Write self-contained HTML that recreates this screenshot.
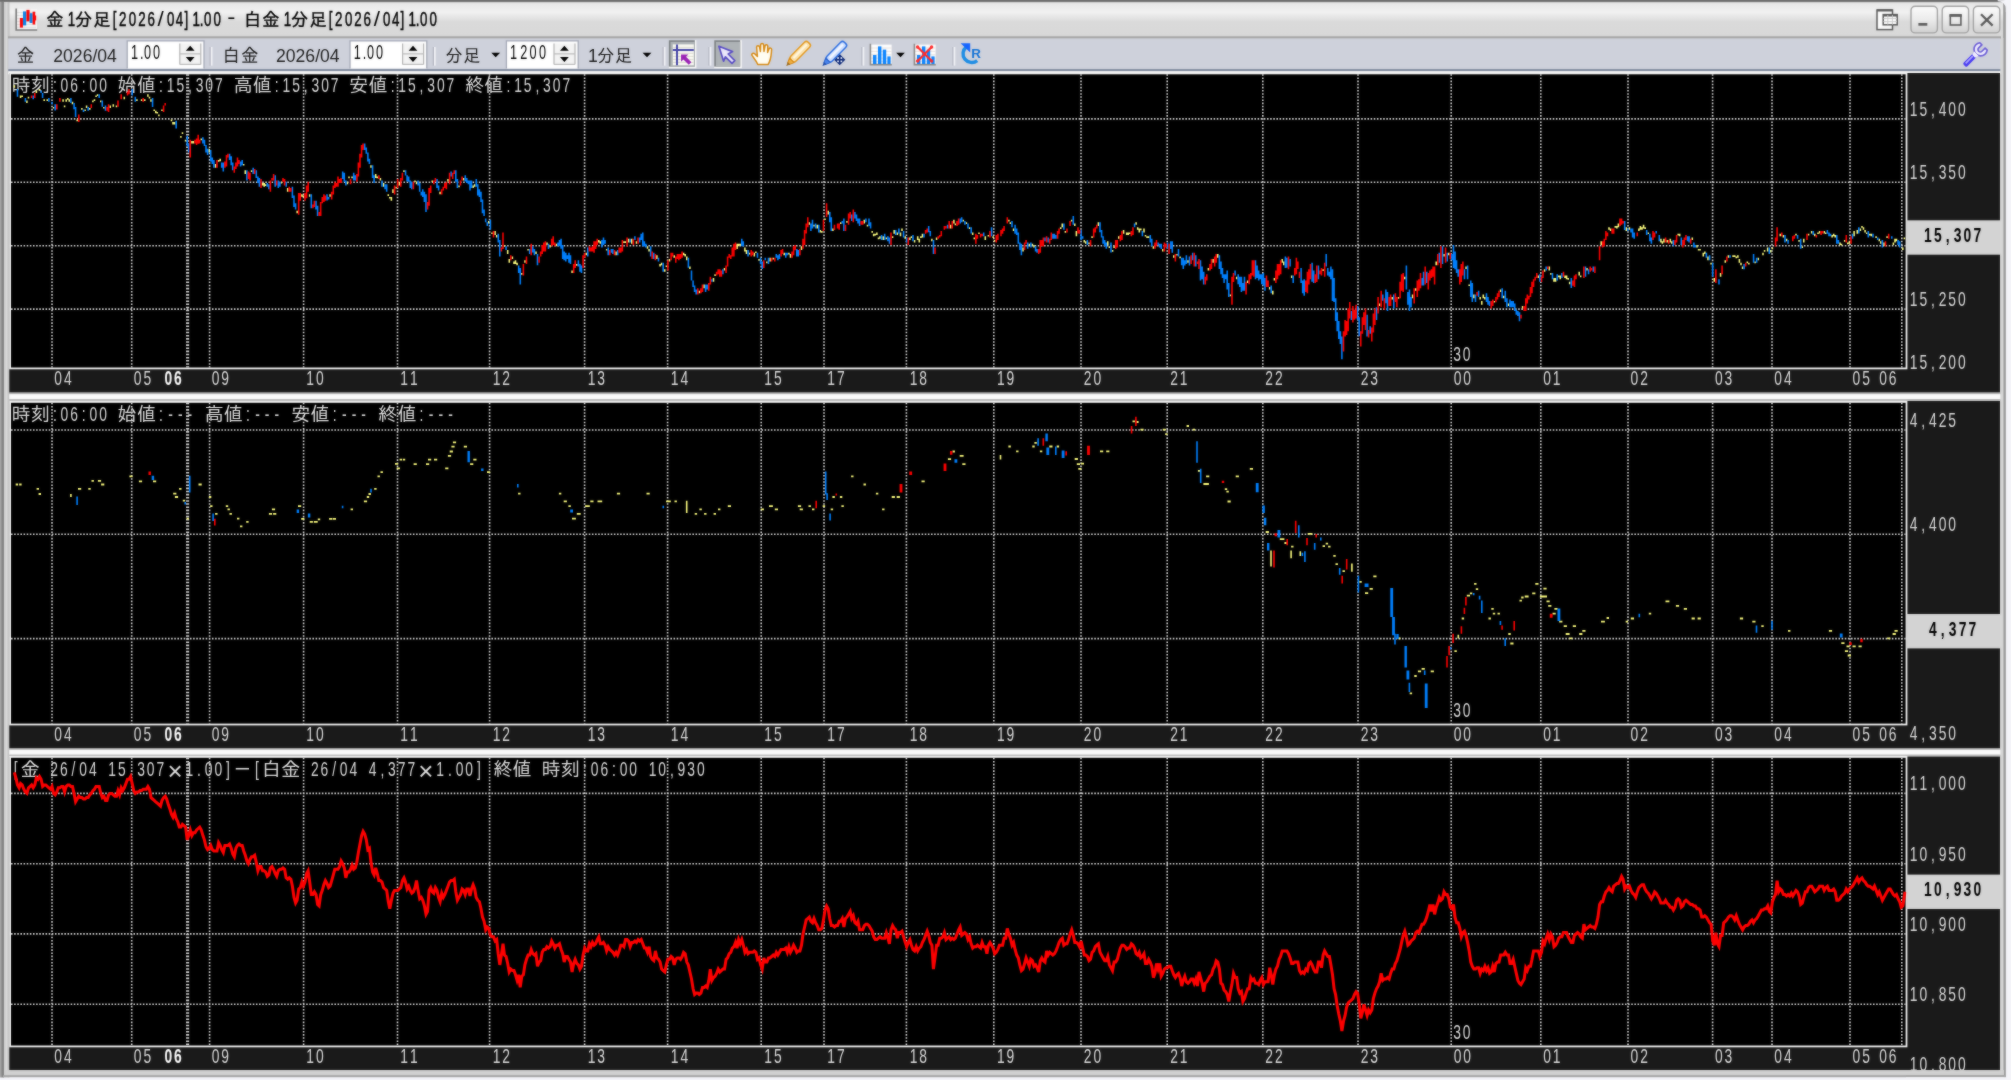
<!DOCTYPE html>
<html lang="ja"><head><meta charset="utf-8"><title>金1分足[2026/04]1.00 - 白金1分足[2026/04]1.00</title>
<style>
html,body{margin:0;padding:0;background:#f4f4f9;overflow:hidden}
svg{display:block}
text{font-family:'Liberation Mono','IPAGothic',monospace;white-space:pre}
.ui text,text.g{font-family:'Liberation Sans','IPAGothic',sans-serif}
</style></head><body>
<svg width="2011" height="1080" viewBox="0 0 2011 1080">
<defs>
<linearGradient id="tb" x1="0" y1="0" x2="0" y2="1">
<stop offset="0" stop-color="#686868"/><stop offset="0.045" stop-color="#7a7a7a"/><stop offset="0.07" stop-color="#e6e6e6"/>
<stop offset="0.32" stop-color="#f1f1f1"/><stop offset="0.58" stop-color="#dadada"/><stop offset="1" stop-color="#d8d8d8"/>
</linearGradient>
<linearGradient id="lb" x1="0" y1="0" x2="1" y2="0">
<stop offset="0" stop-color="#ababab"/><stop offset="0.3" stop-color="#7e7e7e"/><stop offset="0.42" stop-color="#8a8a8a"/><stop offset="0.48" stop-color="#cfcfcf"/><stop offset="0.7" stop-color="#d8d8d8"/><stop offset="0.92" stop-color="#c4c4c4"/><stop offset="1" stop-color="#aaaaaa"/>
</linearGradient>
<linearGradient id="btn" x1="0" y1="0" x2="0" y2="1">
<stop offset="0" stop-color="#fbfbfb"/><stop offset="0.5" stop-color="#ebebeb"/><stop offset="1" stop-color="#d0d0d0"/>
</linearGradient>
<filter id="bl" filterUnits="userSpaceOnUse" x="-10" y="-10" width="2031" height="1100" color-interpolation-filters="sRGB"><feGaussianBlur stdDeviation="0.8" result="b"/><feComposite in="b" in2="SourceGraphic" operator="arithmetic" k1="0" k2="0.45" k3="0.55" k4="0"/></filter>
</defs>
<g filter="url(#bl)">
<rect x="-10" y="-10" width="2031" height="1100" fill="#f4f4f9"/>
<rect x="-10" y="-10" width="2014" height="12" fill="#686868"/>
<rect x="-10" y="0" width="12" height="1077" fill="#ababab"/>
<rect x="0" y="0" width="2005.5" height="1077" fill="#d2d2d2"/>
<rect x="0" y="0" width="2004" height="38" fill="url(#tb)"/>
<rect x="2003.2" y="3" width="2.6" height="1074" fill="#9a9a9a"/>
<rect x="2000" y="38" width="3.4" height="1037" fill="#d6d6d6"/>
<rect x="0" y="2" width="9.3" height="1075.5" fill="url(#lb)"/>
<rect x="4" y="1070" width="2000" height="5.2" fill="#d0d0d0"/>
<rect x="3" y="1075.2" width="2003" height="2" fill="#a4a4a4"/>
<rect x="8" y="36.3" width="1993" height="2.3" fill="#a4a4a4"/>
<rect x="8.3" y="38.5" width="1992" height="30.7" fill="#ced1db"/>
<rect x="8.3" y="69.1" width="1992" height="2.2" fill="#7c879c"/>
<rect x="8.3" y="71.3" width="1992" height="3" fill="#fdfdfd"/>
<rect x="9.3" y="73" width="1990.7" height="319.6" fill="#1a1a1a"/>
<rect x="10.100000000000001" y="73.4" width="1896.4" height="295.0" fill="#000" stroke="#f4f4f4" stroke-width="1.8"/>
<text x="11.4 30.7" y="92.3" font-size="19.30" fill="#dcdcdc">時刻</text>
<text class="g" transform="translate(0 92.3) scale(0.7 1)" x="75.57 86.60 100.39 116.93 127.96 141.75" y="0" font-size="19.8" fill="#dcdcdc">:06:00</text>
<text x="117.6 136.9" y="92.3" font-size="19.30" fill="#dcdcdc">始値</text>
<text class="g" transform="translate(0 92.3) scale(0.7 1)" x="227.21 238.25 252.03 268.57 279.60 293.39 307.17" y="0" font-size="19.8" fill="#dcdcdc">:15,307</text>
<text x="233.4 252.7" y="92.3" font-size="19.30" fill="#dcdcdc">高値</text>
<text class="g" transform="translate(0 92.3) scale(0.7 1)" x="392.64 403.67 417.46 434.00 445.03 458.82 472.60" y="0" font-size="19.8" fill="#dcdcdc">:15,307</text>
<text x="349.1 368.4" y="92.3" font-size="19.30" fill="#dcdcdc">安値</text>
<text class="g" transform="translate(0 92.3) scale(0.7 1)" x="558.07 569.10 582.89 599.43 610.46 624.25 638.03" y="0" font-size="19.8" fill="#dcdcdc">:15,307</text>
<text x="464.9 484.2" y="92.3" font-size="19.30" fill="#dcdcdc">終値</text>
<text class="g" transform="translate(0 92.3) scale(0.7 1)" x="723.50 734.53 748.32 764.85 775.89 789.67 803.46" y="0" font-size="19.8" fill="#dcdcdc">:15,307</text>
<path d="M52 74.3V367.5M131.7 74.3V367.5M209.6 74.3V367.5M303.6 74.3V367.5M397.5 74.3V367.5M489.6 74.3V367.5M584.6 74.3V367.5M667.6 74.3V367.5M761.2 74.3V367.5M824 74.3V367.5M906.4 74.3V367.5M993.8 74.3V367.5M1081 74.3V367.5M1167.2 74.3V367.5M1262.8 74.3V367.5M1358 74.3V367.5M1451.2 74.3V367.5M1540.8 74.3V367.5M1628 74.3V367.5M1712.6 74.3V367.5M1772 74.3V367.5M1850 74.3V367.5M1901.8 74.3V367.5M11.0 118.9H1905.6M11.0 182.3H1905.6M11.0 245.7H1905.6M11.0 309.1H1905.6" stroke="#d6d6d6" stroke-width="1.6" stroke-dasharray="1.57 1.57" fill="none"/>
<path d="M187.6 74.3V367.5" stroke="#d6d6d6" stroke-width="3.1" stroke-dasharray="1.57 1.57" fill="none"/>
<path d="M13.6 85.3h1.57v2.5h-1.57zM19.8 95.4h1.57v2.5h-1.57zM21.4 95.4h1.57v1.7h-1.57zM26.1 100.5h1.57v2.5h-1.57zM27.7 96.7h1.57v1.7h-1.57zM35.6 90.4h1.57v2.5h-1.57zM38.7 89.1h1.57v1.7h-1.57zM43.4 99.2h1.57v1.7h-1.57zM46.5 99.2h1.57v1.7h-1.57zM52.8 106.9h1.57v1.7h-1.57zM62.3 99.2h1.57v2.5h-1.57zM63.8 105.6h1.57v1.7h-1.57zM65.4 99.2h1.57v2.5h-1.57zM67.0 98.0h1.57v1.7h-1.57zM68.5 99.2h1.57v2.5h-1.57zM71.7 101.8h1.57v2.5h-1.57zM76.4 119.5h1.57v1.7h-1.57zM81.1 108.1h1.57v1.7h-1.57zM84.3 109.4h1.57v1.7h-1.57zM85.8 105.6h1.57v2.5h-1.57zM89.0 108.1h1.57v1.7h-1.57zM92.1 100.5h1.57v1.7h-1.57zM93.7 99.2h1.57v1.7h-1.57zM95.3 95.4h1.57v1.7h-1.57zM96.8 94.2h1.57v1.7h-1.57zM100.0 100.5h1.57v1.7h-1.57zM103.1 106.9h1.57v1.7h-1.57zM109.4 105.6h1.57v2.5h-1.57zM112.5 104.3h1.57v2.5h-1.57zM115.7 105.6h1.57v1.7h-1.57zM123.5 96.7h1.57v2.5h-1.57zM136.1 99.2h1.57v1.7h-1.57zM140.8 99.2h1.57v1.7h-1.57zM144.0 99.2h1.57v1.7h-1.57zM147.1 94.2h1.57v2.5h-1.57zM148.7 96.7h1.57v1.7h-1.57zM150.2 99.2h1.57v2.5h-1.57zM153.4 109.4h1.57v1.7h-1.57zM155.0 110.7h1.57v2.5h-1.57zM156.5 111.9h1.57v1.7h-1.57zM158.1 114.5h1.57v1.7h-1.57zM161.2 109.4h1.57v1.7h-1.57zM170.7 119.5h1.57v1.7h-1.57zM172.2 122.1h1.57v2.5h-1.57zM173.8 122.1h1.57v2.5h-1.57zM180.1 136.0h1.57v1.7h-1.57zM181.7 132.2h1.57v1.7h-1.57zM184.8 139.8h1.57v1.7h-1.57zM191.1 141.1h1.57v2.5h-1.57zM192.7 141.1h1.57v2.5h-1.57zM200.5 138.6h1.57v1.7h-1.57zM208.4 148.7h1.57v3.8h-1.57zM214.7 163.9h1.57v3.8h-1.57zM217.8 160.1h1.57v1.7h-1.57zM219.4 158.8h1.57v2.5h-1.57zM242.9 163.9h1.57v1.7h-1.57zM244.5 170.3h1.57v3.8h-1.57zM250.8 170.3h1.57v1.7h-1.57zM261.8 182.9h1.57v2.5h-1.57zM263.4 182.9h1.57v3.8h-1.57zM264.9 184.2h1.57v1.7h-1.57zM280.6 181.7h1.57v1.7h-1.57zM286.9 188.0h1.57v3.8h-1.57zM296.4 210.8h1.57v2.5h-1.57zM301.1 194.3h1.57v2.5h-1.57zM302.6 195.6h1.57v1.7h-1.57zM308.9 194.3h1.57v2.5h-1.57zM329.3 194.3h1.57v2.5h-1.57zM346.6 181.7h1.57v2.5h-1.57zM348.2 176.6h1.57v1.7h-1.57zM351.3 176.6h1.57v1.7h-1.57zM370.2 165.2h1.57v2.5h-1.57zM374.9 174.1h1.57v3.8h-1.57zM376.5 176.6h1.57v1.7h-1.57zM379.6 177.9h1.57v2.5h-1.57zM382.8 182.9h1.57v3.8h-1.57zM387.5 194.3h1.57v1.7h-1.57zM389.0 196.9h1.57v1.7h-1.57zM390.6 196.9h1.57v3.8h-1.57zM392.2 189.3h1.57v3.8h-1.57zM395.3 186.7h1.57v1.7h-1.57zM398.5 181.7h1.57v3.8h-1.57zM403.2 170.3h1.57v1.7h-1.57zM414.2 180.4h1.57v1.7h-1.57zM415.8 181.7h1.57v2.5h-1.57zM431.5 180.4h1.57v1.7h-1.57zM439.3 191.8h1.57v2.5h-1.57zM447.2 179.1h1.57v2.5h-1.57zM458.2 185.5h1.57v1.7h-1.57zM462.9 177.9h1.57v2.5h-1.57zM472.3 185.5h1.57v2.5h-1.57zM473.9 184.2h1.57v2.5h-1.57zM488.0 221.0h1.57v2.5h-1.57zM491.2 232.4h1.57v1.7h-1.57zM494.3 231.1h1.57v3.8h-1.57zM495.9 234.9h1.57v2.5h-1.57zM503.7 245.1h1.57v1.7h-1.57zM506.9 250.1h1.57v3.8h-1.57zM508.5 259.0h1.57v3.8h-1.57zM511.6 256.5h1.57v2.5h-1.57zM513.2 261.5h1.57v2.5h-1.57zM514.7 260.3h1.57v3.8h-1.57zM516.3 262.8h1.57v2.5h-1.57zM521.0 273.0h1.57v1.7h-1.57zM524.2 260.3h1.57v2.5h-1.57zM527.3 248.9h1.57v1.7h-1.57zM535.2 251.4h1.57v2.5h-1.57zM546.2 242.5h1.57v2.5h-1.57zM549.3 245.1h1.57v2.5h-1.57zM555.6 243.8h1.57v2.5h-1.57zM571.3 270.4h1.57v2.5h-1.57zM576.0 264.1h1.57v1.7h-1.57zM585.4 252.7h1.57v2.5h-1.57zM598.0 240.0h1.57v2.5h-1.57zM599.6 241.3h1.57v2.5h-1.57zM605.9 248.9h1.57v1.7h-1.57zM615.3 251.4h1.57v3.8h-1.57zM623.1 241.3h1.57v1.7h-1.57zM624.7 241.3h1.57v1.7h-1.57zM627.9 238.7h1.57v3.8h-1.57zM631.0 238.7h1.57v5.1h-1.57zM635.7 241.3h1.57v2.5h-1.57zM646.7 246.3h1.57v2.5h-1.57zM648.3 248.9h1.57v2.5h-1.57zM656.1 255.2h1.57v3.8h-1.57zM659.3 264.1h1.57v2.5h-1.57zM660.8 262.8h1.57v2.5h-1.57zM664.0 269.2h1.57v2.5h-1.57zM665.6 265.4h1.57v1.7h-1.57zM668.7 259.0h1.57v2.5h-1.57zM673.4 255.2h1.57v2.5h-1.57zM682.8 252.7h1.57v2.5h-1.57zM684.4 253.9h1.57v2.5h-1.57zM686.0 256.5h1.57v3.8h-1.57zM689.1 266.6h1.57v2.5h-1.57zM698.6 290.7h1.57v2.5h-1.57zM703.3 284.4h1.57v3.8h-1.57zM712.7 278.0h1.57v3.8h-1.57zM714.3 274.2h1.57v1.7h-1.57zM723.7 267.9h1.57v2.5h-1.57zM736.3 243.8h1.57v5.1h-1.57zM737.8 243.8h1.57v2.5h-1.57zM739.4 243.8h1.57v1.7h-1.57zM744.1 247.6h1.57v3.8h-1.57zM745.7 250.1h1.57v3.8h-1.57zM748.8 252.7h1.57v1.7h-1.57zM753.5 252.7h1.57v3.8h-1.57zM755.1 251.4h1.57v1.7h-1.57zM758.3 259.0h1.57v1.7h-1.57zM766.1 261.5h1.57v1.7h-1.57zM769.3 257.7h1.57v3.8h-1.57zM772.4 257.7h1.57v1.7h-1.57zM783.4 252.7h1.57v2.5h-1.57zM788.1 252.7h1.57v1.7h-1.57zM789.7 253.9h1.57v3.8h-1.57zM800.7 246.3h1.57v3.8h-1.57zM808.5 222.2h1.57v2.5h-1.57zM813.2 224.8h1.57v1.7h-1.57zM816.4 224.8h1.57v3.8h-1.57zM819.5 229.9h1.57v2.5h-1.57zM821.1 231.1h1.57v1.7h-1.57zM824.2 218.4h1.57v1.7h-1.57zM827.4 210.8h1.57v3.8h-1.57zM832.1 228.6h1.57v2.5h-1.57zM840.0 222.2h1.57v1.7h-1.57zM846.2 221.0h1.57v1.7h-1.57zM863.5 219.7h1.57v3.8h-1.57zM866.7 224.8h1.57v1.7h-1.57zM871.4 231.1h1.57v1.7h-1.57zM872.9 233.7h1.57v2.5h-1.57zM874.5 233.7h1.57v1.7h-1.57zM876.1 232.4h1.57v2.5h-1.57zM877.7 237.5h1.57v1.7h-1.57zM879.2 236.2h1.57v2.5h-1.57zM882.4 236.2h1.57v3.8h-1.57zM885.5 237.5h1.57v1.7h-1.57zM891.8 236.2h1.57v1.7h-1.57zM893.4 229.9h1.57v3.8h-1.57zM896.5 232.4h1.57v2.5h-1.57zM899.7 232.4h1.57v3.8h-1.57zM901.2 228.6h1.57v2.5h-1.57zM904.4 236.2h1.57v2.5h-1.57zM909.1 237.5h1.57v2.5h-1.57zM910.7 236.2h1.57v1.7h-1.57zM913.8 240.0h1.57v2.5h-1.57zM916.9 236.2h1.57v3.8h-1.57zM918.5 238.7h1.57v3.8h-1.57zM920.1 236.2h1.57v1.7h-1.57zM921.7 233.7h1.57v3.8h-1.57zM931.1 238.7h1.57v2.5h-1.57zM935.8 237.5h1.57v2.5h-1.57zM949.9 224.8h1.57v3.8h-1.57zM953.1 219.7h1.57v3.8h-1.57zM954.6 223.5h1.57v1.7h-1.57zM962.5 219.7h1.57v1.7h-1.57zM965.6 222.2h1.57v1.7h-1.57zM968.8 227.3h1.57v1.7h-1.57zM971.9 232.4h1.57v2.5h-1.57zM973.5 237.5h1.57v1.7h-1.57zM978.2 232.4h1.57v1.7h-1.57zM984.5 236.2h1.57v3.8h-1.57zM987.6 234.9h1.57v1.7h-1.57zM992.4 236.2h1.57v1.7h-1.57zM993.9 240.0h1.57v1.7h-1.57zM1008.1 219.7h1.57v1.7h-1.57zM1009.6 222.2h1.57v1.7h-1.57zM1012.8 228.6h1.57v2.5h-1.57zM1022.2 247.6h1.57v3.8h-1.57zM1028.5 243.8h1.57v2.5h-1.57zM1031.6 243.8h1.57v1.7h-1.57zM1033.2 245.1h1.57v2.5h-1.57zM1059.9 227.3h1.57v1.7h-1.57zM1061.5 223.5h1.57v3.8h-1.57zM1064.6 231.1h1.57v1.7h-1.57zM1070.9 219.7h1.57v1.7h-1.57zM1074.0 223.5h1.57v2.5h-1.57zM1075.6 231.1h1.57v5.1h-1.57zM1083.5 240.0h1.57v2.5h-1.57zM1085.0 241.3h1.57v2.5h-1.57zM1088.2 242.5h1.57v1.7h-1.57zM1091.3 236.2h1.57v1.7h-1.57zM1097.6 222.2h1.57v3.8h-1.57zM1107.0 241.3h1.57v3.8h-1.57zM1108.6 246.3h1.57v1.7h-1.57zM1111.8 250.1h1.57v1.7h-1.57zM1113.3 246.3h1.57v1.7h-1.57zM1118.0 236.2h1.57v2.5h-1.57zM1122.8 229.9h1.57v3.8h-1.57zM1125.9 232.4h1.57v2.5h-1.57zM1127.5 232.4h1.57v2.5h-1.57zM1129.0 232.4h1.57v1.7h-1.57zM1135.3 222.2h1.57v2.5h-1.57zM1136.9 227.3h1.57v2.5h-1.57zM1138.5 228.6h1.57v3.8h-1.57zM1140.0 228.6h1.57v1.7h-1.57zM1143.2 228.6h1.57v3.8h-1.57zM1144.7 234.9h1.57v1.7h-1.57zM1146.3 236.2h1.57v1.7h-1.57zM1147.9 236.2h1.57v1.7h-1.57zM1152.6 246.3h1.57v2.5h-1.57zM1162.0 248.9h1.57v2.5h-1.57zM1173.0 255.2h1.57v2.5h-1.57zM1176.2 253.9h1.57v1.7h-1.57zM1179.3 256.5h1.57v1.7h-1.57zM1187.2 260.3h1.57v2.5h-1.57zM1207.6 267.9h1.57v2.5h-1.57zM1212.3 259.0h1.57v3.8h-1.57zM1217.0 253.9h1.57v3.8h-1.57zM1229.6 294.5h1.57v1.7h-1.57zM1235.9 276.8h1.57v2.5h-1.57zM1246.9 280.6h1.57v2.5h-1.57zM1268.9 286.9h1.57v2.5h-1.57zM1272.0 290.7h1.57v3.8h-1.57zM1273.6 278.0h1.57v2.5h-1.57zM1281.4 259.0h1.57v3.8h-1.57zM1283.0 261.5h1.57v3.8h-1.57zM1290.9 275.5h1.57v2.5h-1.57zM1322.3 269.2h1.57v1.7h-1.57zM1378.8 303.4h1.57v2.5h-1.57zM1391.4 297.1h1.57v2.5h-1.57zM1397.7 297.1h1.57v1.7h-1.57zM1404.0 276.8h1.57v2.5h-1.57zM1411.8 294.5h1.57v3.8h-1.57zM1415.0 288.2h1.57v2.5h-1.57zM1435.4 261.5h1.57v3.8h-1.57zM1443.3 253.9h1.57v2.5h-1.57zM1448.0 252.7h1.57v2.5h-1.57zM1465.3 266.6h1.57v2.5h-1.57zM1468.4 284.4h1.57v1.7h-1.57zM1473.1 294.5h1.57v3.8h-1.57zM1479.4 297.1h1.57v2.5h-1.57zM1481.0 300.9h1.57v3.8h-1.57zM1482.5 294.5h1.57v3.8h-1.57zM1484.1 297.1h1.57v2.5h-1.57zM1493.5 300.9h1.57v1.7h-1.57zM1499.8 289.4h1.57v2.5h-1.57zM1503.0 295.8h1.57v2.5h-1.57zM1507.7 303.4h1.57v2.5h-1.57zM1521.8 305.9h1.57v2.5h-1.57zM1537.5 275.5h1.57v2.5h-1.57zM1543.8 269.2h1.57v2.5h-1.57zM1548.5 266.6h1.57v3.8h-1.57zM1550.1 273.0h1.57v1.7h-1.57zM1553.2 278.0h1.57v3.8h-1.57zM1554.8 278.0h1.57v3.8h-1.57zM1557.9 275.5h1.57v1.7h-1.57zM1559.5 275.5h1.57v3.8h-1.57zM1564.2 275.5h1.57v2.5h-1.57zM1565.8 275.5h1.57v3.8h-1.57zM1567.4 278.0h1.57v1.7h-1.57zM1568.9 281.8h1.57v2.5h-1.57zM1578.4 271.7h1.57v3.8h-1.57zM1579.9 275.5h1.57v1.7h-1.57zM1586.2 267.9h1.57v2.5h-1.57zM1600.4 241.3h1.57v3.8h-1.57zM1608.2 227.3h1.57v2.5h-1.57zM1609.8 228.6h1.57v2.5h-1.57zM1614.5 226.0h1.57v1.7h-1.57zM1616.1 226.0h1.57v2.5h-1.57zM1617.6 223.5h1.57v3.8h-1.57zM1625.5 227.3h1.57v3.8h-1.57zM1628.6 227.3h1.57v2.5h-1.57zM1638.1 228.6h1.57v2.5h-1.57zM1639.6 226.0h1.57v3.8h-1.57zM1641.2 227.3h1.57v2.5h-1.57zM1642.8 224.8h1.57v3.8h-1.57zM1644.4 227.3h1.57v1.7h-1.57zM1647.5 232.4h1.57v1.7h-1.57zM1660.1 238.7h1.57v3.8h-1.57zM1661.6 241.3h1.57v2.5h-1.57zM1663.2 238.7h1.57v3.8h-1.57zM1666.4 240.0h1.57v2.5h-1.57zM1669.5 238.7h1.57v3.8h-1.57zM1671.1 241.3h1.57v2.5h-1.57zM1677.4 233.7h1.57v1.7h-1.57zM1678.9 233.7h1.57v2.5h-1.57zM1691.5 237.5h1.57v2.5h-1.57zM1696.2 245.1h1.57v2.5h-1.57zM1697.8 248.9h1.57v1.7h-1.57zM1699.3 248.9h1.57v1.7h-1.57zM1702.5 252.7h1.57v3.8h-1.57zM1704.1 251.4h1.57v2.5h-1.57zM1707.2 256.5h1.57v3.8h-1.57zM1710.3 262.8h1.57v1.7h-1.57zM1713.5 278.0h1.57v3.8h-1.57zM1719.8 273.0h1.57v3.8h-1.57zM1724.5 260.3h1.57v2.5h-1.57zM1727.6 255.2h1.57v2.5h-1.57zM1732.3 255.2h1.57v1.7h-1.57zM1733.9 255.2h1.57v1.7h-1.57zM1735.5 256.5h1.57v1.7h-1.57zM1737.1 255.2h1.57v2.5h-1.57zM1738.6 259.0h1.57v3.8h-1.57zM1740.2 262.8h1.57v2.5h-1.57zM1741.8 266.6h1.57v2.5h-1.57zM1746.5 261.5h1.57v1.7h-1.57zM1748.1 262.8h1.57v1.7h-1.57zM1754.3 261.5h1.57v1.7h-1.57zM1757.5 257.7h1.57v2.5h-1.57zM1762.2 252.7h1.57v2.5h-1.57zM1763.8 250.1h1.57v1.7h-1.57zM1766.9 247.6h1.57v3.8h-1.57zM1770.0 250.1h1.57v2.5h-1.57zM1771.6 247.6h1.57v1.7h-1.57zM1779.5 233.7h1.57v2.5h-1.57zM1782.6 234.9h1.57v2.5h-1.57zM1785.8 238.7h1.57v2.5h-1.57zM1795.2 233.7h1.57v1.7h-1.57zM1798.3 240.0h1.57v1.7h-1.57zM1801.5 246.3h1.57v1.7h-1.57zM1803.0 238.7h1.57v3.8h-1.57zM1807.8 233.7h1.57v1.7h-1.57zM1810.9 231.1h1.57v2.5h-1.57zM1814.0 233.7h1.57v2.5h-1.57zM1817.2 232.4h1.57v1.7h-1.57zM1818.8 231.1h1.57v2.5h-1.57zM1823.5 231.1h1.57v2.5h-1.57zM1825.0 232.4h1.57v1.7h-1.57zM1831.3 234.9h1.57v2.5h-1.57zM1832.9 233.7h1.57v2.5h-1.57zM1834.5 234.9h1.57v2.5h-1.57zM1839.2 242.5h1.57v2.5h-1.57zM1840.7 243.8h1.57v1.7h-1.57zM1843.9 240.0h1.57v1.7h-1.57zM1847.0 242.5h1.57v1.7h-1.57zM1848.6 241.3h1.57v2.5h-1.57zM1853.3 231.1h1.57v5.1h-1.57zM1856.5 229.9h1.57v3.8h-1.57zM1859.6 228.6h1.57v2.5h-1.57zM1861.2 226.0h1.57v1.7h-1.57zM1862.7 227.3h1.57v2.5h-1.57zM1864.3 229.9h1.57v2.5h-1.57zM1865.9 232.4h1.57v1.7h-1.57zM1869.0 233.7h1.57v1.7h-1.57zM1870.6 233.7h1.57v2.5h-1.57zM1875.3 236.2h1.57v1.7h-1.57zM1878.5 238.7h1.57v2.5h-1.57zM1880.0 241.3h1.57v2.5h-1.57zM1883.2 242.5h1.57v3.8h-1.57zM1886.3 236.2h1.57v1.7h-1.57zM1892.6 242.5h1.57v2.5h-1.57zM1894.2 238.7h1.57v3.8h-1.57zM1895.7 238.7h1.57v2.5h-1.57zM1902.0 247.6h1.57v2.5h-1.57zM1903.6 237.5h1.57v1.7h-1.57z" fill="#ffff80"/><path d="M16.7 89.1h1.57v7.6h-1.57zM24.6 98.0h1.57v3.8h-1.57zM32.4 95.4h1.57v3.8h-1.57zM40.3 90.4h1.57v2.5h-1.57zM41.8 92.9h1.57v5.1h-1.57zM48.1 98.0h1.57v3.8h-1.57zM51.3 101.8h1.57v2.5h-1.57zM54.4 104.3h1.57v6.3h-1.57zM70.1 98.0h1.57v5.1h-1.57zM73.3 103.0h1.57v6.3h-1.57zM74.8 106.9h1.57v10.1h-1.57zM82.7 109.4h1.57v2.5h-1.57zM87.4 106.9h1.57v3.8h-1.57zM98.4 94.2h1.57v3.8h-1.57zM101.5 100.5h1.57v6.3h-1.57zM104.7 105.6h1.57v5.1h-1.57zM131.4 89.1h1.57v6.3h-1.57zM134.5 96.7h1.57v5.1h-1.57zM151.8 98.0h1.57v8.9h-1.57zM175.4 120.8h1.57v7.6h-1.57zM186.4 136.0h1.57v10.1h-1.57zM187.9 143.6h1.57v8.9h-1.57zM202.1 137.3h1.57v6.3h-1.57zM203.7 139.8h1.57v6.3h-1.57zM205.2 144.9h1.57v7.6h-1.57zM206.8 148.7h1.57v6.3h-1.57zM209.9 150.0h1.57v11.4h-1.57zM211.5 157.6h1.57v6.3h-1.57zM213.1 160.1h1.57v7.6h-1.57zM220.9 162.6h1.57v5.1h-1.57zM222.5 162.6h1.57v8.9h-1.57zM228.8 153.8h1.57v6.3h-1.57zM230.4 156.3h1.57v8.9h-1.57zM231.9 162.6h1.57v7.6h-1.57zM239.8 161.4h1.57v5.1h-1.57zM241.4 160.1h1.57v5.1h-1.57zM246.1 170.3h1.57v10.1h-1.57zM252.4 167.7h1.57v6.3h-1.57zM255.5 170.3h1.57v7.6h-1.57zM257.1 176.6h1.57v6.3h-1.57zM258.6 177.9h1.57v8.9h-1.57zM266.5 182.9h1.57v3.8h-1.57zM268.1 184.2h1.57v5.1h-1.57zM274.4 175.3h1.57v11.4h-1.57zM277.5 180.4h1.57v7.6h-1.57zM279.1 181.7h1.57v5.1h-1.57zM285.4 181.7h1.57v5.1h-1.57zM291.6 186.7h1.57v11.4h-1.57zM293.2 195.6h1.57v11.4h-1.57zM294.8 203.2h1.57v6.3h-1.57zM310.5 194.3h1.57v13.9h-1.57zM315.2 200.7h1.57v8.9h-1.57zM316.8 205.8h1.57v10.1h-1.57zM326.2 194.3h1.57v6.3h-1.57zM327.8 196.9h1.57v2.5h-1.57zM341.9 171.5h1.57v7.6h-1.57zM343.5 172.8h1.57v8.9h-1.57zM345.1 180.4h1.57v5.1h-1.57zM352.9 172.8h1.57v7.6h-1.57zM354.5 175.3h1.57v5.1h-1.57zM363.9 143.6h1.57v6.3h-1.57zM365.5 147.4h1.57v6.3h-1.57zM367.1 152.5h1.57v8.9h-1.57zM368.6 158.8h1.57v5.1h-1.57zM371.8 165.2h1.57v12.7h-1.57zM373.3 175.3h1.57v7.6h-1.57zM381.2 180.4h1.57v6.3h-1.57zM384.3 184.2h1.57v5.1h-1.57zM385.9 184.2h1.57v7.6h-1.57zM404.8 170.3h1.57v5.1h-1.57zM406.3 175.3h1.57v6.3h-1.57zM407.9 176.6h1.57v5.1h-1.57zM409.5 180.4h1.57v7.6h-1.57zM411.0 181.7h1.57v7.6h-1.57zM417.3 180.4h1.57v5.1h-1.57zM418.9 182.9h1.57v8.9h-1.57zM420.5 191.8h1.57v3.8h-1.57zM422.0 189.3h1.57v7.6h-1.57zM423.6 191.8h1.57v10.1h-1.57zM425.2 194.3h1.57v17.8h-1.57zM436.2 179.1h1.57v8.9h-1.57zM437.8 185.5h1.57v5.1h-1.57zM450.3 171.5h1.57v5.1h-1.57zM455.0 170.3h1.57v11.4h-1.57zM456.6 179.1h1.57v8.9h-1.57zM464.5 175.3h1.57v6.3h-1.57zM466.0 177.9h1.57v5.1h-1.57zM467.6 180.4h1.57v3.8h-1.57zM469.2 180.4h1.57v10.1h-1.57zM470.7 180.4h1.57v7.6h-1.57zM475.5 179.1h1.57v7.6h-1.57zM477.0 184.2h1.57v11.4h-1.57zM478.6 189.3h1.57v7.6h-1.57zM480.2 191.8h1.57v10.1h-1.57zM481.7 199.4h1.57v13.9h-1.57zM483.3 209.6h1.57v6.3h-1.57zM484.9 218.4h1.57v3.8h-1.57zM486.5 222.2h1.57v3.8h-1.57zM489.6 219.7h1.57v10.1h-1.57zM497.5 233.7h1.57v8.9h-1.57zM499.0 240.0h1.57v16.5h-1.57zM505.3 246.3h1.57v3.8h-1.57zM517.9 265.4h1.57v7.6h-1.57zM519.5 267.9h1.57v16.5h-1.57zM528.9 248.9h1.57v5.1h-1.57zM532.0 246.3h1.57v6.3h-1.57zM533.6 248.9h1.57v6.3h-1.57zM536.7 253.9h1.57v11.4h-1.57zM547.7 243.8h1.57v5.1h-1.57zM557.2 242.5h1.57v3.8h-1.57zM558.7 240.0h1.57v6.3h-1.57zM560.3 238.7h1.57v10.1h-1.57zM561.9 245.1h1.57v13.9h-1.57zM563.4 251.4h1.57v8.9h-1.57zM565.0 252.7h1.57v8.9h-1.57zM566.6 255.2h1.57v3.8h-1.57zM568.2 252.7h1.57v10.1h-1.57zM569.7 255.2h1.57v8.9h-1.57zM577.6 260.3h1.57v6.3h-1.57zM579.2 264.1h1.57v7.6h-1.57zM580.7 265.4h1.57v7.6h-1.57zM587.0 247.6h1.57v8.9h-1.57zM601.1 240.0h1.57v7.6h-1.57zM602.7 237.5h1.57v7.6h-1.57zM604.3 240.0h1.57v3.8h-1.57zM607.4 247.6h1.57v7.6h-1.57zM610.6 248.9h1.57v3.8h-1.57zM612.1 248.9h1.57v5.1h-1.57zM616.9 250.1h1.57v5.1h-1.57zM629.4 238.7h1.57v3.8h-1.57zM634.1 236.2h1.57v3.8h-1.57zM638.9 237.5h1.57v5.1h-1.57zM640.4 233.7h1.57v6.3h-1.57zM642.0 232.4h1.57v13.9h-1.57zM643.6 241.3h1.57v5.1h-1.57zM645.1 243.8h1.57v3.8h-1.57zM649.9 246.3h1.57v10.1h-1.57zM653.0 252.7h1.57v6.3h-1.57zM657.7 257.7h1.57v3.8h-1.57zM662.4 262.8h1.57v8.9h-1.57zM687.6 257.7h1.57v10.1h-1.57zM690.7 270.4h1.57v10.1h-1.57zM692.3 280.6h1.57v6.3h-1.57zM693.8 285.6h1.57v6.3h-1.57zM695.4 289.4h1.57v5.1h-1.57zM704.8 284.4h1.57v7.6h-1.57zM706.4 284.4h1.57v5.1h-1.57zM711.1 279.3h1.57v2.5h-1.57zM722.1 269.2h1.57v5.1h-1.57zM741.0 238.7h1.57v7.6h-1.57zM742.5 241.3h1.57v5.1h-1.57zM747.3 250.1h1.57v6.3h-1.57zM756.7 252.7h1.57v5.1h-1.57zM759.8 257.7h1.57v6.3h-1.57zM761.4 261.5h1.57v7.6h-1.57zM764.5 257.7h1.57v2.5h-1.57zM767.7 257.7h1.57v6.3h-1.57zM775.5 253.9h1.57v3.8h-1.57zM777.1 255.2h1.57v5.1h-1.57zM778.7 253.9h1.57v5.1h-1.57zM785.0 252.7h1.57v5.1h-1.57zM786.5 252.7h1.57v2.5h-1.57zM796.0 248.9h1.57v7.6h-1.57zM797.5 250.1h1.57v6.3h-1.57zM810.1 223.5h1.57v7.6h-1.57zM811.7 219.7h1.57v8.9h-1.57zM814.8 223.5h1.57v5.1h-1.57zM818.0 224.8h1.57v7.6h-1.57zM829.0 212.1h1.57v10.1h-1.57zM830.5 217.2h1.57v13.9h-1.57zM841.5 221.0h1.57v2.5h-1.57zM843.1 218.4h1.57v12.7h-1.57zM851.0 214.6h1.57v6.3h-1.57zM854.1 212.1h1.57v6.3h-1.57zM855.7 214.6h1.57v6.3h-1.57zM857.2 218.4h1.57v5.1h-1.57zM858.8 218.4h1.57v7.6h-1.57zM865.1 218.4h1.57v3.8h-1.57zM868.2 218.4h1.57v7.6h-1.57zM869.8 222.2h1.57v6.3h-1.57zM880.8 234.9h1.57v5.1h-1.57zM883.9 233.7h1.57v6.3h-1.57zM887.1 236.2h1.57v5.1h-1.57zM888.7 237.5h1.57v6.3h-1.57zM894.9 229.9h1.57v5.1h-1.57zM898.1 228.6h1.57v5.1h-1.57zM902.8 231.1h1.57v6.3h-1.57zM905.9 237.5h1.57v5.1h-1.57zM912.2 234.9h1.57v6.3h-1.57zM923.2 233.7h1.57v3.8h-1.57zM927.9 226.0h1.57v6.3h-1.57zM929.5 231.1h1.57v5.1h-1.57zM932.7 240.0h1.57v13.9h-1.57zM946.8 224.8h1.57v3.8h-1.57zM959.4 218.4h1.57v5.1h-1.57zM960.9 217.2h1.57v5.1h-1.57zM964.1 221.0h1.57v3.8h-1.57zM967.2 223.5h1.57v5.1h-1.57zM970.4 227.3h1.57v6.3h-1.57zM982.9 232.4h1.57v3.8h-1.57zM990.8 227.3h1.57v8.9h-1.57zM1011.2 221.0h1.57v6.3h-1.57zM1014.3 224.8h1.57v8.9h-1.57zM1015.9 228.6h1.57v6.3h-1.57zM1017.5 232.4h1.57v11.4h-1.57zM1019.1 242.5h1.57v7.6h-1.57zM1020.6 243.8h1.57v11.4h-1.57zM1026.9 242.5h1.57v6.3h-1.57zM1030.1 242.5h1.57v5.1h-1.57zM1034.8 246.3h1.57v5.1h-1.57zM1036.3 248.9h1.57v3.8h-1.57zM1044.2 237.5h1.57v3.8h-1.57zM1047.3 237.5h1.57v5.1h-1.57zM1052.1 233.7h1.57v5.1h-1.57zM1053.6 233.7h1.57v5.1h-1.57zM1055.2 234.9h1.57v3.8h-1.57zM1063.1 223.5h1.57v6.3h-1.57zM1072.5 215.9h1.57v8.9h-1.57zM1080.3 229.9h1.57v10.1h-1.57zM1081.9 236.2h1.57v2.5h-1.57zM1086.6 240.0h1.57v5.1h-1.57zM1099.2 222.2h1.57v10.1h-1.57zM1100.8 229.9h1.57v7.6h-1.57zM1102.3 236.2h1.57v7.6h-1.57zM1103.9 240.0h1.57v6.3h-1.57zM1105.5 242.5h1.57v6.3h-1.57zM1110.2 242.5h1.57v10.1h-1.57zM1133.8 223.5h1.57v3.8h-1.57zM1141.6 231.1h1.57v5.1h-1.57zM1149.5 234.9h1.57v7.6h-1.57zM1151.0 238.7h1.57v7.6h-1.57zM1157.3 242.5h1.57v2.5h-1.57zM1158.9 243.8h1.57v3.8h-1.57zM1160.5 243.8h1.57v5.1h-1.57zM1166.7 242.5h1.57v6.3h-1.57zM1169.9 241.3h1.57v7.6h-1.57zM1171.5 241.3h1.57v11.4h-1.57zM1177.7 248.9h1.57v7.6h-1.57zM1180.9 257.7h1.57v7.6h-1.57zM1182.5 257.7h1.57v11.4h-1.57zM1184.0 260.3h1.57v5.1h-1.57zM1185.6 255.2h1.57v8.9h-1.57zM1188.7 256.5h1.57v8.9h-1.57zM1191.9 252.7h1.57v7.6h-1.57zM1195.0 255.2h1.57v11.4h-1.57zM1199.7 260.3h1.57v20.3h-1.57zM1201.3 266.6h1.57v12.7h-1.57zM1202.9 271.7h1.57v12.7h-1.57zM1218.6 255.2h1.57v13.9h-1.57zM1220.2 261.5h1.57v12.7h-1.57zM1221.7 267.9h1.57v10.1h-1.57zM1223.3 274.2h1.57v8.9h-1.57zM1224.9 274.2h1.57v5.1h-1.57zM1226.4 270.4h1.57v19.0h-1.57zM1228.0 283.1h1.57v13.9h-1.57zM1234.3 270.4h1.57v5.1h-1.57zM1237.4 274.2h1.57v10.1h-1.57zM1239.0 276.8h1.57v10.1h-1.57zM1240.6 276.8h1.57v15.2h-1.57zM1242.2 283.1h1.57v7.6h-1.57zM1243.7 276.8h1.57v13.9h-1.57zM1254.7 260.3h1.57v19.0h-1.57zM1256.3 265.4h1.57v12.7h-1.57zM1257.9 270.4h1.57v10.1h-1.57zM1259.4 274.2h1.57v5.1h-1.57zM1261.0 274.2h1.57v10.1h-1.57zM1262.6 273.0h1.57v12.7h-1.57zM1264.2 278.0h1.57v12.7h-1.57zM1270.4 285.6h1.57v7.6h-1.57zM1284.6 256.5h1.57v11.4h-1.57zM1286.1 257.7h1.57v10.1h-1.57zM1289.3 259.0h1.57v7.6h-1.57zM1292.4 275.5h1.57v7.6h-1.57zM1300.3 267.9h1.57v15.2h-1.57zM1301.9 280.6h1.57v12.7h-1.57zM1303.4 279.3h1.57v16.5h-1.57zM1311.3 262.8h1.57v19.0h-1.57zM1312.9 270.4h1.57v12.7h-1.57zM1317.6 265.4h1.57v13.9h-1.57zM1325.4 253.9h1.57v12.7h-1.57zM1327.0 267.9h1.57v7.6h-1.57zM1328.6 271.7h1.57v5.1h-1.57zM1330.1 266.6h1.57v12.7h-1.57zM1331.7 269.2h1.57v31.7h-1.57zM1333.3 278.0h1.57v24.1h-1.57zM1334.9 298.3h1.57v22.8h-1.57zM1336.4 312.3h1.57v19.0h-1.57zM1338.0 321.1h1.57v17.8h-1.57zM1339.6 331.3h1.57v12.7h-1.57zM1341.1 336.4h1.57v22.8h-1.57zM1350.6 311.0h1.57v8.9h-1.57zM1356.8 305.9h1.57v13.9h-1.57zM1358.4 317.3h1.57v19.0h-1.57zM1366.3 314.8h1.57v21.6h-1.57zM1369.4 326.2h1.57v7.6h-1.57zM1375.7 307.2h1.57v12.7h-1.57zM1382.0 294.5h1.57v6.3h-1.57zM1385.1 289.4h1.57v13.9h-1.57zM1386.7 292.0h1.57v19.0h-1.57zM1393.0 294.5h1.57v13.9h-1.57zM1405.6 265.4h1.57v24.1h-1.57zM1407.1 292.0h1.57v12.7h-1.57zM1408.7 289.4h1.57v21.6h-1.57zM1410.3 297.1h1.57v10.1h-1.57zM1421.3 278.0h1.57v7.6h-1.57zM1422.8 271.7h1.57v13.9h-1.57zM1426.0 271.7h1.57v11.4h-1.57zM1438.5 252.7h1.57v10.1h-1.57zM1441.7 246.3h1.57v17.8h-1.57zM1446.4 252.7h1.57v8.9h-1.57zM1451.1 253.9h1.57v6.3h-1.57zM1452.7 245.1h1.57v22.8h-1.57zM1454.3 251.4h1.57v17.8h-1.57zM1455.8 260.3h1.57v12.7h-1.57zM1457.4 269.2h1.57v7.6h-1.57zM1463.7 269.2h1.57v10.1h-1.57zM1466.8 265.4h1.57v13.9h-1.57zM1470.0 280.6h1.57v16.5h-1.57zM1471.5 283.1h1.57v19.0h-1.57zM1474.7 294.5h1.57v7.6h-1.57zM1477.8 290.7h1.57v6.3h-1.57zM1485.7 293.2h1.57v8.9h-1.57zM1487.2 297.1h1.57v7.6h-1.57zM1488.8 300.9h1.57v5.1h-1.57zM1501.4 288.2h1.57v10.1h-1.57zM1504.5 290.7h1.57v11.4h-1.57zM1506.1 298.3h1.57v8.9h-1.57zM1509.2 299.6h1.57v7.6h-1.57zM1510.8 300.9h1.57v6.3h-1.57zM1512.4 300.9h1.57v6.3h-1.57zM1514.0 303.4h1.57v7.6h-1.57zM1515.5 309.7h1.57v5.1h-1.57zM1517.1 311.0h1.57v5.1h-1.57zM1518.7 312.3h1.57v8.9h-1.57zM1539.1 274.2h1.57v7.6h-1.57zM1545.4 266.6h1.57v3.8h-1.57zM1551.7 273.0h1.57v6.3h-1.57zM1556.4 274.2h1.57v6.3h-1.57zM1561.1 273.0h1.57v5.1h-1.57zM1570.5 278.0h1.57v10.1h-1.57zM1584.7 266.6h1.57v10.1h-1.57zM1587.8 269.2h1.57v5.1h-1.57zM1592.5 266.6h1.57v5.1h-1.57zM1623.9 221.0h1.57v8.9h-1.57zM1627.1 228.6h1.57v2.5h-1.57zM1630.2 228.6h1.57v3.8h-1.57zM1631.8 228.6h1.57v8.9h-1.57zM1633.4 232.4h1.57v6.3h-1.57zM1645.9 229.9h1.57v5.1h-1.57zM1649.1 233.7h1.57v7.6h-1.57zM1650.6 237.5h1.57v6.3h-1.57zM1655.4 231.1h1.57v2.5h-1.57zM1658.5 234.9h1.57v6.3h-1.57zM1672.6 240.0h1.57v6.3h-1.57zM1680.5 237.5h1.57v7.6h-1.57zM1686.8 236.2h1.57v5.1h-1.57zM1688.3 236.2h1.57v6.3h-1.57zM1693.1 242.5h1.57v5.1h-1.57zM1694.6 245.1h1.57v2.5h-1.57zM1705.6 252.7h1.57v5.1h-1.57zM1708.8 255.2h1.57v5.1h-1.57zM1711.9 262.8h1.57v13.9h-1.57zM1718.2 279.3h1.57v5.1h-1.57zM1729.2 255.2h1.57v2.5h-1.57zM1743.3 264.1h1.57v5.1h-1.57zM1752.8 253.9h1.57v8.9h-1.57zM1755.9 257.7h1.57v5.1h-1.57zM1768.5 247.6h1.57v6.3h-1.57zM1784.2 234.9h1.57v7.6h-1.57zM1787.3 240.0h1.57v3.8h-1.57zM1796.8 234.9h1.57v3.8h-1.57zM1799.9 238.7h1.57v10.1h-1.57zM1812.5 231.1h1.57v3.8h-1.57zM1826.6 229.9h1.57v3.8h-1.57zM1828.2 232.4h1.57v3.8h-1.57zM1829.7 233.7h1.57v2.5h-1.57zM1836.0 234.9h1.57v8.9h-1.57zM1837.6 240.0h1.57v3.8h-1.57zM1851.7 233.7h1.57v5.1h-1.57zM1858.0 227.3h1.57v6.3h-1.57zM1867.5 231.1h1.57v6.3h-1.57zM1872.2 233.7h1.57v3.8h-1.57zM1876.9 237.5h1.57v2.5h-1.57zM1881.6 240.0h1.57v7.6h-1.57zM1891.0 236.2h1.57v2.5h-1.57zM1897.3 240.0h1.57v5.1h-1.57zM1898.9 241.3h1.57v6.3h-1.57z" fill="#0080ff"/><path d="M30.8 95.4h1.57v2.5h-1.57zM34.0 92.9h1.57v5.1h-1.57zM56.0 104.3h1.57v5.1h-1.57zM59.1 98.0h1.57v3.8h-1.57zM78.0 114.5h1.57v7.6h-1.57zM90.5 104.3h1.57v3.8h-1.57zM106.3 106.9h1.57v3.8h-1.57zM107.8 104.3h1.57v7.6h-1.57zM117.2 100.5h1.57v6.3h-1.57zM120.4 94.2h1.57v5.1h-1.57zM126.7 91.6h1.57v3.8h-1.57zM128.2 89.1h1.57v5.1h-1.57zM142.4 98.0h1.57v3.8h-1.57zM162.8 105.6h1.57v6.3h-1.57zM164.4 103.0h1.57v2.5h-1.57zM189.5 139.8h1.57v17.8h-1.57zM194.2 139.8h1.57v3.8h-1.57zM195.8 138.6h1.57v6.3h-1.57zM197.4 134.8h1.57v8.9h-1.57zM198.9 139.8h1.57v3.8h-1.57zM216.2 160.1h1.57v7.6h-1.57zM224.1 161.4h1.57v6.3h-1.57zM225.7 155.0h1.57v11.4h-1.57zM227.2 153.8h1.57v3.8h-1.57zM233.5 166.5h1.57v6.3h-1.57zM235.1 162.6h1.57v6.3h-1.57zM236.7 157.6h1.57v8.9h-1.57zM238.2 160.1h1.57v3.8h-1.57zM247.7 171.5h1.57v7.6h-1.57zM249.2 172.8h1.57v7.6h-1.57zM253.9 169.0h1.57v5.1h-1.57zM260.2 179.1h1.57v8.9h-1.57zM269.6 180.4h1.57v11.4h-1.57zM271.2 177.9h1.57v2.5h-1.57zM272.8 174.1h1.57v6.3h-1.57zM275.9 180.4h1.57v5.1h-1.57zM282.2 177.9h1.57v3.8h-1.57zM283.8 179.1h1.57v6.3h-1.57zM288.5 186.7h1.57v5.1h-1.57zM290.1 188.0h1.57v3.8h-1.57zM297.9 193.1h1.57v21.6h-1.57zM299.5 193.1h1.57v7.6h-1.57zM304.2 193.1h1.57v7.6h-1.57zM305.8 185.5h1.57v12.7h-1.57zM307.4 181.7h1.57v10.1h-1.57zM312.1 204.5h1.57v3.8h-1.57zM313.6 200.7h1.57v6.3h-1.57zM318.4 212.1h1.57v3.8h-1.57zM319.9 202.0h1.57v13.9h-1.57zM321.5 196.9h1.57v6.3h-1.57zM323.1 194.3h1.57v7.6h-1.57zM324.6 195.6h1.57v5.1h-1.57zM330.9 191.8h1.57v7.6h-1.57zM332.5 185.5h1.57v8.9h-1.57zM334.1 181.7h1.57v6.3h-1.57zM335.6 182.9h1.57v3.8h-1.57zM337.2 176.6h1.57v10.1h-1.57zM338.8 179.1h1.57v3.8h-1.57zM340.3 177.9h1.57v5.1h-1.57zM349.8 179.1h1.57v5.1h-1.57zM356.1 174.1h1.57v7.6h-1.57zM357.6 162.6h1.57v13.9h-1.57zM359.2 153.8h1.57v13.9h-1.57zM360.8 144.9h1.57v12.7h-1.57zM362.3 143.6h1.57v6.3h-1.57zM378.1 175.3h1.57v3.8h-1.57zM393.8 185.5h1.57v8.9h-1.57zM396.9 179.1h1.57v8.9h-1.57zM400.0 177.9h1.57v8.9h-1.57zM401.6 172.8h1.57v7.6h-1.57zM412.6 181.7h1.57v7.6h-1.57zM426.8 202.0h1.57v7.6h-1.57zM428.3 188.0h1.57v17.8h-1.57zM429.9 185.5h1.57v7.6h-1.57zM433.0 180.4h1.57v3.8h-1.57zM434.6 177.9h1.57v3.8h-1.57zM440.9 189.3h1.57v5.1h-1.57zM442.5 186.7h1.57v3.8h-1.57zM444.0 182.9h1.57v5.1h-1.57zM445.6 181.7h1.57v7.6h-1.57zM448.8 172.8h1.57v11.4h-1.57zM451.9 172.8h1.57v6.3h-1.57zM453.5 170.3h1.57v3.8h-1.57zM459.7 180.4h1.57v5.1h-1.57zM461.3 176.6h1.57v3.8h-1.57zM492.7 231.1h1.57v6.3h-1.57zM500.6 247.6h1.57v3.8h-1.57zM502.2 232.4h1.57v16.5h-1.57zM510.0 255.2h1.57v5.1h-1.57zM522.6 264.1h1.57v11.4h-1.57zM525.7 256.5h1.57v7.6h-1.57zM530.4 243.8h1.57v11.4h-1.57zM538.3 256.5h1.57v6.3h-1.57zM539.9 251.4h1.57v5.1h-1.57zM541.4 245.1h1.57v8.9h-1.57zM543.0 242.5h1.57v8.9h-1.57zM544.6 241.3h1.57v10.1h-1.57zM550.9 238.7h1.57v7.6h-1.57zM552.4 236.2h1.57v8.9h-1.57zM554.0 242.5h1.57v3.8h-1.57zM572.9 264.1h1.57v8.9h-1.57zM574.4 260.3h1.57v7.6h-1.57zM582.3 255.2h1.57v12.7h-1.57zM583.9 252.7h1.57v5.1h-1.57zM588.6 246.3h1.57v5.1h-1.57zM590.2 247.6h1.57v3.8h-1.57zM591.7 246.3h1.57v5.1h-1.57zM593.3 241.3h1.57v11.4h-1.57zM594.9 241.3h1.57v7.6h-1.57zM596.4 238.7h1.57v6.3h-1.57zM609.0 250.1h1.57v5.1h-1.57zM613.7 250.1h1.57v5.1h-1.57zM618.4 247.6h1.57v5.1h-1.57zM620.0 247.6h1.57v5.1h-1.57zM621.6 240.0h1.57v11.4h-1.57zM626.3 237.5h1.57v8.9h-1.57zM632.6 238.7h1.57v6.3h-1.57zM637.3 237.5h1.57v6.3h-1.57zM651.4 251.4h1.57v7.6h-1.57zM654.6 253.9h1.57v6.3h-1.57zM667.1 260.3h1.57v10.1h-1.57zM670.3 252.7h1.57v7.6h-1.57zM671.8 252.7h1.57v3.8h-1.57zM675.0 256.5h1.57v6.3h-1.57zM676.6 253.9h1.57v5.1h-1.57zM678.1 253.9h1.57v6.3h-1.57zM679.7 253.9h1.57v5.1h-1.57zM681.3 251.4h1.57v6.3h-1.57zM697.0 288.2h1.57v6.3h-1.57zM700.1 288.2h1.57v5.1h-1.57zM701.7 284.4h1.57v7.6h-1.57zM708.0 283.1h1.57v7.6h-1.57zM709.6 276.8h1.57v7.6h-1.57zM715.8 271.7h1.57v3.8h-1.57zM717.4 269.2h1.57v5.1h-1.57zM719.0 269.2h1.57v7.6h-1.57zM720.6 270.4h1.57v6.3h-1.57zM725.3 265.4h1.57v7.6h-1.57zM726.8 256.5h1.57v10.1h-1.57zM728.4 253.9h1.57v3.8h-1.57zM730.0 255.2h1.57v3.8h-1.57zM731.5 247.6h1.57v8.9h-1.57zM733.1 243.8h1.57v12.7h-1.57zM734.7 242.5h1.57v7.6h-1.57zM750.4 250.1h1.57v6.3h-1.57zM752.0 251.4h1.57v3.8h-1.57zM763.0 260.3h1.57v7.6h-1.57zM770.8 257.7h1.57v3.8h-1.57zM774.0 257.7h1.57v3.8h-1.57zM780.3 250.1h1.57v6.3h-1.57zM781.8 248.9h1.57v5.1h-1.57zM791.3 251.4h1.57v6.3h-1.57zM792.8 246.3h1.57v8.9h-1.57zM794.4 245.1h1.57v5.1h-1.57zM799.1 248.9h1.57v6.3h-1.57zM802.2 238.7h1.57v10.1h-1.57zM803.8 229.9h1.57v15.2h-1.57zM805.4 223.5h1.57v10.1h-1.57zM807.0 217.2h1.57v10.1h-1.57zM822.7 219.7h1.57v11.4h-1.57zM825.8 203.2h1.57v13.9h-1.57zM833.7 224.8h1.57v5.1h-1.57zM836.8 223.5h1.57v5.1h-1.57zM838.4 223.5h1.57v6.3h-1.57zM844.7 224.8h1.57v6.3h-1.57zM847.8 213.4h1.57v11.4h-1.57zM849.4 212.1h1.57v6.3h-1.57zM852.5 209.6h1.57v12.7h-1.57zM860.4 221.0h1.57v3.8h-1.57zM862.0 221.0h1.57v3.8h-1.57zM890.2 232.4h1.57v12.7h-1.57zM907.5 237.5h1.57v7.6h-1.57zM924.8 229.9h1.57v3.8h-1.57zM926.4 228.6h1.57v3.8h-1.57zM934.2 247.6h1.57v6.3h-1.57zM937.4 236.2h1.57v2.5h-1.57zM938.9 234.9h1.57v2.5h-1.57zM940.5 231.1h1.57v5.1h-1.57zM943.6 226.0h1.57v3.8h-1.57zM945.2 226.0h1.57v2.5h-1.57zM948.4 221.0h1.57v7.6h-1.57zM951.5 221.0h1.57v7.6h-1.57zM956.2 221.0h1.57v5.1h-1.57zM957.8 218.4h1.57v6.3h-1.57zM975.1 233.7h1.57v10.1h-1.57zM976.6 234.9h1.57v3.8h-1.57zM979.8 233.7h1.57v3.8h-1.57zM981.4 233.7h1.57v2.5h-1.57zM989.2 231.1h1.57v6.3h-1.57zM995.5 234.9h1.57v7.6h-1.57zM997.1 233.7h1.57v6.3h-1.57zM1000.2 229.9h1.57v6.3h-1.57zM1001.8 228.6h1.57v5.1h-1.57zM1003.3 226.0h1.57v5.1h-1.57zM1006.5 217.2h1.57v6.3h-1.57zM1023.8 242.5h1.57v7.6h-1.57zM1025.3 240.0h1.57v3.8h-1.57zM1037.9 248.9h1.57v5.1h-1.57zM1039.5 240.0h1.57v12.7h-1.57zM1041.1 240.0h1.57v6.3h-1.57zM1042.6 237.5h1.57v8.9h-1.57zM1045.8 236.2h1.57v6.3h-1.57zM1048.9 238.7h1.57v5.1h-1.57zM1050.5 232.4h1.57v7.6h-1.57zM1056.8 231.1h1.57v7.6h-1.57zM1058.3 228.6h1.57v5.1h-1.57zM1066.2 228.6h1.57v3.8h-1.57zM1069.3 221.0h1.57v5.1h-1.57zM1077.2 227.3h1.57v6.3h-1.57zM1078.8 229.9h1.57v3.8h-1.57zM1089.8 240.0h1.57v6.3h-1.57zM1092.9 228.6h1.57v8.9h-1.57zM1094.5 227.3h1.57v5.1h-1.57zM1096.0 224.8h1.57v3.8h-1.57zM1114.9 240.0h1.57v8.9h-1.57zM1116.5 240.0h1.57v7.6h-1.57zM1119.6 234.9h1.57v6.3h-1.57zM1121.2 231.1h1.57v8.9h-1.57zM1130.6 231.1h1.57v5.1h-1.57zM1132.2 227.3h1.57v7.6h-1.57zM1154.2 242.5h1.57v6.3h-1.57zM1155.7 240.0h1.57v6.3h-1.57zM1163.6 242.5h1.57v8.9h-1.57zM1165.2 243.8h1.57v3.8h-1.57zM1168.3 243.8h1.57v10.1h-1.57zM1174.6 253.9h1.57v7.6h-1.57zM1190.3 255.2h1.57v8.9h-1.57zM1193.5 252.7h1.57v13.9h-1.57zM1196.6 261.5h1.57v2.5h-1.57zM1198.2 259.0h1.57v10.1h-1.57zM1204.5 276.8h1.57v7.6h-1.57zM1206.0 274.2h1.57v6.3h-1.57zM1209.2 264.1h1.57v6.3h-1.57zM1210.7 259.0h1.57v10.1h-1.57zM1213.9 256.5h1.57v10.1h-1.57zM1215.4 253.9h1.57v8.9h-1.57zM1231.2 276.8h1.57v27.9h-1.57zM1232.7 273.0h1.57v8.9h-1.57zM1245.3 281.8h1.57v12.7h-1.57zM1248.4 274.2h1.57v10.1h-1.57zM1250.0 273.0h1.57v6.3h-1.57zM1251.6 260.3h1.57v15.2h-1.57zM1253.2 260.3h1.57v16.5h-1.57zM1265.7 275.5h1.57v11.4h-1.57zM1267.3 280.6h1.57v6.3h-1.57zM1275.1 270.4h1.57v12.7h-1.57zM1276.7 264.1h1.57v15.2h-1.57zM1278.3 264.1h1.57v11.4h-1.57zM1279.9 260.3h1.57v13.9h-1.57zM1287.7 256.5h1.57v12.7h-1.57zM1294.0 267.9h1.57v7.6h-1.57zM1295.6 257.7h1.57v16.5h-1.57zM1297.1 261.5h1.57v7.6h-1.57zM1298.7 271.7h1.57v6.3h-1.57zM1305.0 280.6h1.57v11.4h-1.57zM1306.6 271.7h1.57v21.6h-1.57zM1308.1 269.2h1.57v15.2h-1.57zM1309.7 264.1h1.57v15.2h-1.57zM1314.4 274.2h1.57v8.9h-1.57zM1316.0 265.4h1.57v16.5h-1.57zM1319.1 270.4h1.57v3.8h-1.57zM1320.7 267.9h1.57v7.6h-1.57zM1323.9 262.8h1.57v13.9h-1.57zM1342.7 331.3h1.57v20.3h-1.57zM1344.3 319.9h1.57v16.5h-1.57zM1345.8 321.1h1.57v13.9h-1.57zM1347.4 308.5h1.57v22.8h-1.57zM1349.0 302.1h1.57v16.5h-1.57zM1352.1 305.9h1.57v16.5h-1.57zM1353.7 309.7h1.57v10.1h-1.57zM1355.3 304.7h1.57v13.9h-1.57zM1360.0 331.3h1.57v15.2h-1.57zM1361.6 317.3h1.57v16.5h-1.57zM1363.1 312.3h1.57v12.7h-1.57zM1364.7 308.5h1.57v21.6h-1.57zM1367.8 330.0h1.57v7.6h-1.57zM1371.0 327.5h1.57v13.9h-1.57zM1372.6 313.5h1.57v19.0h-1.57zM1374.1 308.5h1.57v16.5h-1.57zM1377.3 297.1h1.57v16.5h-1.57zM1380.4 290.7h1.57v16.5h-1.57zM1383.6 298.3h1.57v11.4h-1.57zM1388.3 297.1h1.57v8.9h-1.57zM1389.8 294.5h1.57v11.4h-1.57zM1394.6 293.2h1.57v8.9h-1.57zM1396.1 297.1h1.57v10.1h-1.57zM1399.3 281.8h1.57v16.5h-1.57zM1400.8 274.2h1.57v16.5h-1.57zM1402.4 273.0h1.57v19.0h-1.57zM1413.4 288.2h1.57v15.2h-1.57zM1416.5 280.6h1.57v16.5h-1.57zM1418.1 279.3h1.57v11.4h-1.57zM1419.7 273.0h1.57v15.2h-1.57zM1424.4 266.6h1.57v17.8h-1.57zM1427.5 273.0h1.57v16.5h-1.57zM1429.1 270.4h1.57v10.1h-1.57zM1430.7 269.2h1.57v8.9h-1.57zM1432.3 266.6h1.57v10.1h-1.57zM1433.8 266.6h1.57v17.8h-1.57zM1437.0 253.9h1.57v11.4h-1.57zM1440.1 246.3h1.57v21.6h-1.57zM1444.8 247.6h1.57v15.2h-1.57zM1449.5 252.7h1.57v6.3h-1.57zM1459.0 269.2h1.57v15.2h-1.57zM1460.5 264.1h1.57v17.8h-1.57zM1462.1 261.5h1.57v13.9h-1.57zM1476.3 292.0h1.57v3.8h-1.57zM1490.4 300.9h1.57v7.6h-1.57zM1492.0 299.6h1.57v6.3h-1.57zM1495.1 297.1h1.57v5.1h-1.57zM1496.7 293.2h1.57v6.3h-1.57zM1498.2 290.7h1.57v6.3h-1.57zM1520.2 314.8h1.57v3.8h-1.57zM1523.4 305.9h1.57v5.1h-1.57zM1525.0 298.3h1.57v12.7h-1.57zM1526.5 294.5h1.57v8.9h-1.57zM1528.1 295.8h1.57v3.8h-1.57zM1529.7 286.9h1.57v10.1h-1.57zM1531.2 281.8h1.57v11.4h-1.57zM1532.8 279.3h1.57v7.6h-1.57zM1534.4 276.8h1.57v3.8h-1.57zM1536.0 273.0h1.57v5.1h-1.57zM1540.7 276.8h1.57v5.1h-1.57zM1542.2 270.4h1.57v7.6h-1.57zM1547.0 266.6h1.57v2.5h-1.57zM1562.7 271.7h1.57v5.1h-1.57zM1572.1 280.6h1.57v5.1h-1.57zM1573.7 275.5h1.57v11.4h-1.57zM1575.2 274.2h1.57v5.1h-1.57zM1583.1 266.6h1.57v11.4h-1.57zM1589.4 266.6h1.57v5.1h-1.57zM1590.9 267.9h1.57v2.5h-1.57zM1594.1 266.6h1.57v6.3h-1.57zM1598.8 246.3h1.57v13.9h-1.57zM1601.9 241.3h1.57v6.3h-1.57zM1603.5 238.7h1.57v7.6h-1.57zM1605.1 231.1h1.57v8.9h-1.57zM1606.7 232.4h1.57v3.8h-1.57zM1611.4 228.6h1.57v5.1h-1.57zM1612.9 228.6h1.57v5.1h-1.57zM1619.2 218.4h1.57v7.6h-1.57zM1620.8 218.4h1.57v6.3h-1.57zM1622.4 221.0h1.57v2.5h-1.57zM1636.5 232.4h1.57v3.8h-1.57zM1652.2 231.1h1.57v8.9h-1.57zM1653.8 232.4h1.57v5.1h-1.57zM1664.8 237.5h1.57v5.1h-1.57zM1667.9 240.0h1.57v3.8h-1.57zM1674.2 240.0h1.57v5.1h-1.57zM1675.8 234.9h1.57v7.6h-1.57zM1682.1 240.0h1.57v7.6h-1.57zM1683.6 237.5h1.57v7.6h-1.57zM1685.2 234.9h1.57v5.1h-1.57zM1689.9 238.7h1.57v5.1h-1.57zM1715.1 269.2h1.57v13.9h-1.57zM1721.3 265.4h1.57v8.9h-1.57zM1726.1 256.5h1.57v5.1h-1.57zM1744.9 262.8h1.57v3.8h-1.57zM1774.8 237.5h1.57v8.9h-1.57zM1776.3 227.3h1.57v13.9h-1.57zM1781.0 232.4h1.57v3.8h-1.57zM1792.0 236.2h1.57v5.1h-1.57zM1793.6 234.9h1.57v3.8h-1.57zM1806.2 233.7h1.57v6.3h-1.57zM1815.6 234.9h1.57v2.5h-1.57zM1820.3 231.1h1.57v3.8h-1.57zM1821.9 231.1h1.57v2.5h-1.57zM1845.5 234.9h1.57v7.6h-1.57zM1850.2 236.2h1.57v7.6h-1.57zM1884.7 241.3h1.57v5.1h-1.57zM1887.9 233.7h1.57v5.1h-1.57z" fill="#ff0000"/>
<text class="g" transform="translate(0 384.6) scale(0.7 1)" x="77.67 91.46" y="0" font-size="19.8" fill="#dcdcdc">04</text>
<text class="g" transform="translate(0 384.6) scale(0.7 1)" x="191.25 205.03" y="0" font-size="19.8" fill="#dcdcdc">05</text>
<text class="g" transform="translate(0 384.6) scale(0.7 1)" x="234.96 248.75" y="0" font-size="19.8" fill="#ffffff" font-weight="bold">06</text>
<text class="g" transform="translate(0 384.6) scale(0.7 1)" x="302.39 316.17" y="0" font-size="19.8" fill="#dcdcdc">09</text>
<text class="g" transform="translate(0 384.6) scale(0.7 1)" x="437.67 451.46" y="0" font-size="19.8" fill="#dcdcdc">10</text>
<text class="g" transform="translate(0 384.6) scale(0.7 1)" x="571.96 585.75" y="0" font-size="19.8" fill="#dcdcdc">11</text>
<text class="g" transform="translate(0 384.6) scale(0.7 1)" x="703.82 717.60" y="0" font-size="19.8" fill="#dcdcdc">12</text>
<text class="g" transform="translate(0 384.6) scale(0.7 1)" x="839.53 853.32" y="0" font-size="19.8" fill="#dcdcdc">13</text>
<text class="g" transform="translate(0 384.6) scale(0.7 1)" x="958.39 972.17" y="0" font-size="19.8" fill="#dcdcdc">14</text>
<text class="g" transform="translate(0 384.6) scale(0.7 1)" x="1091.96 1105.75" y="0" font-size="19.8" fill="#dcdcdc">15</text>
<text class="g" transform="translate(0 384.6) scale(0.7 1)" x="1181.96 1195.75" y="0" font-size="19.8" fill="#dcdcdc">17</text>
<text class="g" transform="translate(0 384.6) scale(0.7 1)" x="1299.53 1313.32" y="0" font-size="19.8" fill="#dcdcdc">18</text>
<text class="g" transform="translate(0 384.6) scale(0.7 1)" x="1424.25 1438.03" y="0" font-size="19.8" fill="#dcdcdc">19</text>
<text class="g" transform="translate(0 384.6) scale(0.7 1)" x="1548.39 1562.17" y="0" font-size="19.8" fill="#dcdcdc">20</text>
<text class="g" transform="translate(0 384.6) scale(0.7 1)" x="1671.67 1685.46" y="0" font-size="19.8" fill="#dcdcdc">21</text>
<text class="g" transform="translate(0 384.6) scale(0.7 1)" x="1807.67 1821.46" y="0" font-size="19.8" fill="#dcdcdc">22</text>
<text class="g" transform="translate(0 384.6) scale(0.7 1)" x="1943.82 1957.60" y="0" font-size="19.8" fill="#dcdcdc">23</text>
<text class="g" transform="translate(0 384.6) scale(0.7 1)" x="2076.67 2090.46" y="0" font-size="19.8" fill="#dcdcdc">00</text>
<text class="g" transform="translate(0 384.6) scale(0.7 1)" x="2204.53 2218.32" y="0" font-size="19.8" fill="#dcdcdc">01</text>
<text class="g" transform="translate(0 384.6) scale(0.7 1)" x="2329.39 2343.17" y="0" font-size="19.8" fill="#dcdcdc">02</text>
<text class="g" transform="translate(0 384.6) scale(0.7 1)" x="2449.96 2463.75" y="0" font-size="19.8" fill="#dcdcdc">03</text>
<text class="g" transform="translate(0 384.6) scale(0.7 1)" x="2534.82 2548.60" y="0" font-size="19.8" fill="#dcdcdc">04</text>
<text class="g" transform="translate(0 384.6) scale(0.7 1)" x="2646.53 2660.32" y="0" font-size="19.8" fill="#dcdcdc">05</text>
<text class="g" transform="translate(0 384.6) scale(0.7 1)" x="2684.53 2698.32" y="0" font-size="19.8" fill="#dcdcdc">06</text>
<text class="g" transform="translate(0 360.9) scale(0.7 1)" x="2075.96 2089.75" y="0" font-size="19.8" fill="#dcdcdc">30</text>
<text class="g" transform="translate(0 115.7) scale(0.7 1)" x="2728.25 2742.03 2758.57 2769.60 2783.39 2797.17" y="0" font-size="19.8" fill="#dcdcdc">15,400</text>
<text class="g" transform="translate(0 179.1) scale(0.7 1)" x="2728.25 2742.03 2758.57 2769.60 2783.39 2797.17" y="0" font-size="19.8" fill="#dcdcdc">15,350</text>
<text class="g" transform="translate(0 305.9) scale(0.7 1)" x="2728.25 2742.03 2758.57 2769.60 2783.39 2797.17" y="0" font-size="19.8" fill="#dcdcdc">15,250</text>
<text class="g" transform="translate(0 369.3) scale(0.7 1)" x="2728.25 2742.03 2758.57 2769.60 2783.39 2797.17" y="0" font-size="19.8" fill="#dcdcdc">15,200</text>
<rect x="1906.4" y="220.3" width="93.6" height="34.4" fill="#d3d3d3"/>
<text class="g" transform="translate(0 242.1) scale(0.7 1)" x="2748.57 2762.71 2779.60 2791.00 2805.14 2819.28" y="0" font-size="19.8" fill="#000" font-weight="bold">15,307</text>
<rect x="9.3" y="392.6" width="1991" height="1.6" fill="#b4b4b4"/>
<rect x="9.3" y="394.20000000000005" width="1991" height="5" fill="#fafafa"/>
<rect x="9.3" y="399.0" width="1991" height="2" fill="#bcbcbc"/>
<rect x="9.3" y="748.2" width="1991" height="1.6" fill="#b4b4b4"/>
<rect x="9.3" y="749.8000000000001" width="1991" height="5" fill="#fafafa"/>
<rect x="9.3" y="754.6" width="1991" height="2" fill="#bcbcbc"/>
<rect x="9.3" y="401" width="1990.7" height="347.20000000000005" fill="#1a1a1a"/>
<rect x="10.100000000000001" y="401.9" width="1896.4" height="322.59999999999997" fill="#000" stroke="#f4f4f4" stroke-width="1.8"/>
<text x="11.4 30.7" y="420.8" font-size="19.30" fill="#dcdcdc">時刻</text>
<text class="g" transform="translate(0 420.8) scale(0.7 1)" x="75.57 86.60 100.39 116.93 127.96 141.75" y="0" font-size="19.8" fill="#dcdcdc">:06:00</text>
<text x="117.6 136.9" y="420.8" font-size="19.30" fill="#dcdcdc">始値</text>
<text class="g" transform="translate(0 420.8) scale(0.7 1)" x="227.21 240.45 254.24 268.02" y="0" font-size="19.8" fill="#dcdcdc">:---</text>
<text x="204.4 223.7" y="420.8" font-size="19.30" fill="#dcdcdc">高値</text>
<text class="g" transform="translate(0 420.8) scale(0.7 1)" x="351.28 364.52 378.31 392.10" y="0" font-size="19.8" fill="#dcdcdc">:---</text>
<text x="291.2 310.6" y="420.8" font-size="19.30" fill="#dcdcdc">安値</text>
<text class="g" transform="translate(0 420.8) scale(0.7 1)" x="475.35 488.60 502.38 516.17" y="0" font-size="19.8" fill="#dcdcdc">:---</text>
<text x="378.1 397.4" y="420.8" font-size="19.30" fill="#dcdcdc">終値</text>
<text class="g" transform="translate(0 420.8) scale(0.7 1)" x="599.43 612.67 626.45 640.24" y="0" font-size="19.8" fill="#dcdcdc">:---</text>
<path d="M52 402.8V723.6M131.7 402.8V723.6M209.6 402.8V723.6M303.6 402.8V723.6M397.5 402.8V723.6M489.6 402.8V723.6M584.6 402.8V723.6M667.6 402.8V723.6M761.2 402.8V723.6M824 402.8V723.6M906.4 402.8V723.6M993.8 402.8V723.6M1081 402.8V723.6M1167.2 402.8V723.6M1262.8 402.8V723.6M1358 402.8V723.6M1451.2 402.8V723.6M1540.8 402.8V723.6M1628 402.8V723.6M1712.6 402.8V723.6M1772 402.8V723.6M1850 402.8V723.6M1901.8 402.8V723.6M11.0 430H1905.6M11.0 534.3H1905.6M11.0 638.6H1905.6" stroke="#d6d6d6" stroke-width="1.6" stroke-dasharray="1.57 1.57" fill="none"/>
<path d="M187.6 402.8V723.6" stroke="#d6d6d6" stroke-width="3.1" stroke-dasharray="1.57 1.57" fill="none"/>
<path d="M15.7 483.6h2.4v1.8h-2.4zM19.2 483.6h2.4v1.8h-2.4zM36.6 487.9h2.4v1.8h-2.4zM38.6 493.1h2.4v1.8h-2.4zM70.1 494.0h1.6v3.0h-1.6zM78.0 487.9h3.2v1.8h-3.2zM88.3 487.9h2.4v1.8h-2.4zM91.5 479.9h2.4v1.8h-2.4zM97.9 479.9h3.2v1.8h-3.2zM101.1 483.6h3.2v1.8h-3.2zM129.4 475.4h3.2v1.8h-3.2zM138.9 480.4h3.2v1.8h-3.2zM153.0 480.4h3.2v1.8h-3.2zM173.2 492.8h3.2v1.8h-3.2zM174.9 496.1h3.2v1.8h-3.2zM179.1 487.9h2.4v1.8h-2.4zM182.8 499.8h2.4v1.8h-2.4zM186.5 517.7h2.4v1.8h-2.4zM198.5 483.6h3.2v1.8h-3.2zM208.9 496.1h2.4v1.8h-2.4zM210.1 505.3h2.4v1.8h-2.4zM215.1 513.0h2.4v1.8h-2.4zM225.8 505.3h2.4v1.8h-2.4zM227.5 508.5h2.4v1.8h-2.4zM229.5 513.0h2.4v1.8h-2.4zM237.0 517.7h2.4v1.8h-2.4zM240.0 525.4h2.4v1.8h-2.4zM246.2 520.9h2.4v1.8h-2.4zM268.9 513.0h3.2v1.8h-3.2zM271.9 508.5h3.2v1.8h-3.2zM273.1 513.0h3.2v1.8h-3.2zM298.0 505.3h3.2v1.8h-3.2zM301.2 517.9h3.2v1.8h-3.2zM309.7 520.9h3.2v1.8h-3.2zM313.8 520.9h3.9v1.8h-3.9zM317.8 518.4h2.4v1.8h-2.4zM329.1 517.9h3.2v1.8h-3.2zM332.8 517.9h3.2v1.8h-3.2zM350.6 508.5h2.4v1.8h-2.4zM363.9 500.5h3.2v1.8h-3.2zM366.8 496.1h2.4v1.8h-2.4zM368.5 493.1h2.4v1.8h-2.4zM374.2 487.9h2.4v1.8h-2.4zM377.5 475.4h2.4v1.8h-2.4zM380.5 471.2h2.4v1.8h-2.4zM395.0 463.0h3.2v1.8h-3.2zM396.7 467.5h3.2v1.8h-3.2zM399.6 458.8h2.4v1.8h-2.4zM402.8 458.8h2.4v1.8h-2.4zM413.6 463.2h3.2v1.8h-3.2zM426.0 463.2h3.2v1.8h-3.2zM428.0 458.8h3.2v1.8h-3.2zM434.0 458.8h3.2v1.8h-3.2zM445.2 467.5h3.2v1.8h-3.2zM447.9 455.0h3.2v1.8h-3.2zM449.7 450.6h3.2v1.8h-3.2zM451.4 445.8h3.2v1.8h-3.2zM452.9 441.4h3.2v1.8h-3.2zM463.8 445.8h3.2v1.8h-3.2zM470.1 463.2h3.2v1.8h-3.2zM473.3 458.8h3.2v1.8h-3.2zM487.0 471.2h3.2v1.8h-3.2zM518.1 492.8h2.4v1.8h-2.4zM558.9 492.8h2.4v1.8h-2.4zM563.7 500.5h3.2v1.8h-3.2zM568.4 505.3h2.4v1.8h-2.4zM572.0 517.7h3.9v1.8h-3.9zM576.8 513.0h3.9v1.8h-3.9zM585.1 505.3h4.7v1.8h-4.7zM590.3 500.5h3.2v1.8h-3.2zM597.5 500.5h4.7v1.8h-4.7zM616.9 492.8h3.2v1.8h-3.2zM646.5 492.8h3.2v1.8h-3.2zM666.1 500.5h4.7v1.8h-4.7zM674.5 500.5h2.4v1.8h-2.4zM685.9 500.7h1.6v12.4h-1.6zM694.7 513.0h2.4v1.8h-2.4zM699.4 508.5h2.4v1.8h-2.4zM704.1 513.0h2.4v1.8h-2.4zM713.6 513.0h2.4v1.8h-2.4zM718.0 508.5h2.4v1.8h-2.4zM727.8 505.3h3.2v1.8h-3.2zM760.7 508.5h3.2v1.8h-3.2zM769.0 505.3h3.9v1.8h-3.9zM774.8 508.5h3.2v1.8h-3.2zM797.9 505.3h3.2v1.8h-3.2zM799.7 508.5h3.2v1.8h-3.2zM808.5 505.3h2.4v1.8h-2.4zM812.0 508.5h2.4v1.8h-2.4zM822.7 505.3h2.4v1.8h-2.4zM830.7 508.5h2.4v1.8h-2.4zM832.4 496.1h2.4v1.8h-2.4zM839.9 496.1h2.4v1.8h-2.4zM841.4 505.3h2.4v1.8h-2.4zM851.1 475.4h2.4v1.8h-2.4zM863.5 483.6h2.4v1.8h-2.4zM875.9 492.8h2.4v1.8h-2.4zM882.1 508.5h2.4v1.8h-2.4zM891.7 496.1h3.2v1.8h-3.2zM896.7 496.1h3.2v1.8h-3.2zM921.5 480.4h3.2v1.8h-3.2zM947.9 458.3h3.2v1.8h-3.2zM952.5 450.6h2.4v1.8h-2.4zM959.7 455.0h3.9v1.8h-3.9zM962.3 463.2h3.2v1.8h-3.2zM999.7 455.0h1.6v4.6h-1.6zM1008.4 445.6h2.4v1.8h-2.4zM1016.1 450.4h2.4v1.8h-2.4zM1032.3 445.6h2.4v1.8h-2.4zM1034.4 441.9h2.4v1.8h-2.4zM1039.9 450.4h2.4v1.8h-2.4zM1049.3 445.6h3.2v1.8h-3.2zM1056.7 445.6h2.4v1.8h-2.4zM1074.7 458.1h3.2v1.8h-3.2zM1076.8 463.3h3.2v1.8h-3.2zM1078.3 467.9h3.2v1.8h-3.2zM1080.8 462.7h3.2v1.8h-3.2zM1100.0 450.4h3.2v1.8h-3.2zM1106.2 450.4h3.2v1.8h-3.2zM1132.5 420.5h2.4v1.8h-2.4zM1136.2 421.1h2.4v1.8h-2.4zM1140.4 428.7h3.2v1.8h-3.2zM1162.7 428.7h3.2v1.8h-3.2zM1165.2 433.3h2.4v1.8h-2.4zM1186.6 425.1h2.4v1.8h-2.4zM1192.7 428.7h2.4v1.8h-2.4zM1197.9 470.0h2.4v1.8h-2.4zM1203.4 483.1h5.5v1.8h-5.5zM1206.1 475.5h3.2v1.8h-3.2zM1224.8 488.3h2.4v1.8h-2.4zM1226.4 490.8h2.4v1.8h-2.4zM1227.5 500.6h3.2v1.8h-3.2zM1235.7 475.5h3.2v1.8h-3.2zM1249.8 467.9h3.2v1.8h-3.2zM1265.7 531.1h3.2v1.8h-3.2zM1270.2 550.4h1.6v16.2h-1.6zM1279.8 538.2h2.4v1.8h-2.4zM1282.0 538.2h2.4v1.8h-2.4zM1284.4 542.1h2.4v1.8h-2.4zM1290.3 550.4h1.6v7.9h-1.6zM1291.1 545.8h2.4v1.8h-2.4zM1299.5 551.3h1.6v4.6h-1.6zM1307.7 533.0h4.7v1.8h-4.7zM1322.6 545.2h2.4v1.8h-2.4zM1325.7 542.7h2.4v1.8h-2.4zM1328.1 545.8h2.4v1.8h-2.4zM1333.3 555.0h2.4v1.8h-2.4zM1335.5 563.2h2.4v1.8h-2.4zM1342.5 570.2h2.4v1.8h-2.4zM1351.1 563.5h1.6v8.3h-1.6zM1359.3 580.9h2.4v1.8h-2.4zM1365.0 592.3h3.2v1.8h-3.2zM1369.6 588.0h3.2v1.8h-3.2zM1373.3 575.4h3.2v1.8h-3.2zM1398.1 637.5h2.4v1.8h-2.4zM1409.7 692.5h2.4v1.8h-2.4zM1414.3 675.1h2.4v1.8h-2.4zM1417.9 670.5h3.2v1.8h-3.2zM1421.6 668.0h3.2v1.8h-3.2zM1430.7 670.5h3.2v1.8h-3.2zM1454.4 650.3h2.4v1.8h-2.4zM1457.5 634.7h1.6v3.7h-1.6zM1461.7 617.6h2.4v1.8h-2.4zM1466.8 594.7h3.2v1.8h-3.2zM1469.9 592.5h2.4v1.8h-2.4zM1474.1 583.0h2.4v1.8h-2.4zM1475.8 588.2h2.4v1.8h-2.4zM1488.5 617.6h2.4v1.8h-2.4zM1491.3 608.0h2.4v1.8h-2.4zM1492.8 612.8h2.4v1.8h-2.4zM1497.5 612.8h2.4v1.8h-2.4zM1508.3 633.1h2.4v1.8h-2.4zM1510.3 642.6h3.2v1.8h-3.2zM1519.5 599.7h2.4v1.8h-2.4zM1521.2 596.6h2.4v1.8h-2.4zM1524.7 595.6h3.9v1.8h-3.9zM1532.2 592.5h3.2v1.8h-3.2zM1535.3 583.0h3.2v1.8h-3.2zM1539.9 595.6h7.1v1.8h-7.1zM1543.4 587.7h3.2v1.8h-3.2zM1546.5 600.4h3.2v1.8h-3.2zM1548.2 604.9h3.2v1.8h-3.2zM1552.5 612.8h3.2v1.8h-3.2zM1554.4 608.0h3.2v1.8h-3.2zM1559.2 620.7h3.2v1.8h-3.2zM1563.7 625.2h3.2v1.8h-3.2zM1565.7 633.1h3.9v1.8h-3.9zM1569.2 637.4h3.2v1.8h-3.2zM1572.8 625.2h3.2v1.8h-3.2zM1579.2 633.1h3.2v1.8h-3.2zM1582.3 630.0h3.2v1.8h-3.2zM1601.0 620.7h3.9v1.8h-3.9zM1606.6 617.1h2.4v1.8h-2.4zM1625.7 620.7h2.4v1.8h-2.4zM1630.8 617.6h3.2v1.8h-3.2zM1648.8 612.8h2.4v1.8h-2.4zM1665.5 600.4h3.9v1.8h-3.9zM1675.9 604.9h3.2v1.8h-3.2zM1683.8 608.0h3.2v1.8h-3.2zM1691.6 617.6h3.2v1.8h-3.2zM1697.6 617.6h3.2v1.8h-3.2zM1739.9 617.6h3.2v1.8h-3.2zM1752.3 620.7h3.2v1.8h-3.2zM1761.3 625.2h2.4v1.8h-2.4zM1788.0 630.0h2.4v1.8h-2.4zM1828.9 630.0h3.2v1.8h-3.2zM1841.3 642.2h3.2v1.8h-3.2zM1844.9 650.3h3.2v1.8h-3.2zM1846.5 645.5h3.2v1.8h-3.2zM1847.7 654.6h3.2v1.8h-3.2zM1852.5 645.5h3.2v1.8h-3.2zM1858.5 645.5h3.2v1.8h-3.2zM1887.1 637.4h3.2v1.8h-3.2zM1892.6 633.1h3.2v1.8h-3.2zM1894.5 630.0h3.2v1.8h-3.2z" fill="#ffff80"/><path d="M76.3 496.5h1.6v8.4h-1.6zM151.7 475.8h2.4v4.3h-2.4zM184.4 501.9h1.6v2.5h-1.6zM188.9 475.8h1.6v16.7h-1.6zM212.3 513.6h1.6v7.5h-1.6zM296.7 509.4h2.4v3.7h-2.4zM307.9 513.6h2.4v3.8h-2.4zM341.8 505.7h1.6v2.5h-1.6zM370.2 488.8h1.6v3.7h-1.6zM467.5 451.0h2.4v11.2h-2.4zM481.1 468.4h2.4v2.5h-2.4zM517.0 484.0h1.6v3.5h-1.6zM570.2 509.4h2.8v3.0h-2.8zM662.5 505.7h1.6v2.5h-1.6zM824.9 471.6h1.6v22.9h-1.6zM826.3 493.2h1.6v6.8h-1.6zM829.3 513.6h1.6v7.0h-1.6zM954.5 459.2h2.8v3.5h-2.8zM1037.3 438.2h1.6v7.6h-1.6zM1045.4 433.6h2.4v7.7h-2.4zM1046.4 447.4h2.8v7.6h-2.8zM1055.0 446.5h1.6v8.5h-1.6zM1061.7 450.4h2.8v7.7h-2.8zM1196.2 441.3h1.6v21.4h-1.6zM1199.9 468.8h1.6v14.3h-1.6zM1255.8 483.1h2.8v9.2h-2.8zM1262.4 505.4h2.4v7.7h-2.4zM1263.9 517.7h2.4v7.6h-2.4zM1267.0 543.0h2.4v7.4h-2.4zM1277.5 529.9h2.8v7.6h-2.8zM1298.0 525.3h1.6v12.2h-1.6zM1301.6 552.8h1.6v3.1h-1.6zM1304.1 551.3h1.6v10.7h-1.6zM1313.9 543.0h1.6v6.8h-1.6zM1320.0 537.5h1.6v3.1h-1.6zM1338.9 568.1h1.6v6.7h-1.6zM1357.6 575.7h1.6v16.8h-1.6zM1364.6 583.4h3.9v3.6h-3.9zM1390.3 588.0h2.8v29.0h-2.8zM1392.1 617.0h2.8v18.3h-2.8zM1394.2 633.8h1.6v10.7h-1.6zM1396.3 634.1h2.4v4.9h-2.4zM1404.5 646.0h2.4v21.4h-2.4zM1406.5 670.5h2.8v9.1h-2.8zM1408.6 682.7h1.6v9.2h-1.6zM1423.9 670.5h1.6v4.6h-1.6zM1424.8 683.6h2.8v24.5h-2.8zM1449.9 646.9h1.6v2.5h-1.6zM1472.9 592.9h1.6v2.4h-1.6zM1478.8 595.8h1.6v3.6h-1.6zM1481.0 600.6h1.6v12.4h-1.6zM1499.6 620.9h1.6v4.0h-1.6zM1504.4 638.3h1.6v7.6h-1.6zM1557.5 608.4h2.8v12.5h-2.8zM1638.5 613.7h1.6v3.6h-1.6zM1755.7 625.6h1.6v7.2h-1.6zM1771.2 620.9h1.6v8.8h-1.6zM1839.8 633.5h2.8v4.1h-2.8z" fill="#0080ff"/><path d="M148.5 471.6h2.4v3.5h-2.4zM214.0 518.8h1.6v6.8h-1.6zM815.4 500.7h1.6v7.5h-1.6zM835.5 493.5h1.6v2.0h-1.6zM899.6 484.0h2.8v8.5h-2.8zM909.3 471.6h2.8v3.5h-2.8zM943.6 463.4h2.8v7.5h-2.8zM950.0 451.0h2.4v3.7h-2.4zM1042.5 438.2h1.6v7.6h-1.6zM1065.4 451.3h1.6v4.3h-1.6zM1087.1 445.8h2.8v9.2h-2.8zM1130.8 426.0h1.6v7.6h-1.6zM1135.1 416.8h1.6v9.2h-1.6zM1221.8 480.7h2.4v2.4h-2.4zM1273.2 550.4h1.6v17.1h-1.6zM1274.6 533.3h2.4v3.0h-2.4zM1286.4 539.1h1.6v6.1h-1.6zM1294.9 520.7h1.6v12.2h-1.6zM1306.2 538.1h1.6v7.1h-1.6zM1315.4 533.9h1.6v3.6h-1.6zM1341.4 575.7h1.6v7.7h-1.6zM1345.9 558.9h1.6v10.7h-1.6zM1446.2 656.1h1.6v11.3h-1.6zM1448.3 646.0h1.6v9.2h-1.6zM1452.3 633.8h1.6v9.2h-1.6zM1460.6 626.2h1.6v7.6h-1.6zM1463.6 607.8h1.6v6.1h-1.6zM1465.1 597.1h1.6v8.3h-1.6zM1501.3 625.6h1.6v4.1h-1.6zM1513.4 620.9h1.6v9.5h-1.6zM1549.8 613.7h2.8v4.1h-2.8zM1849.3 642.3h2.4v2.7h-2.4zM1860.3 638.8h2.4v3.5h-2.4z" fill="#ff0000"/>
<text class="g" transform="translate(0 740.7) scale(0.7 1)" x="77.67 91.46" y="0" font-size="19.8" fill="#dcdcdc">04</text>
<text class="g" transform="translate(0 740.7) scale(0.7 1)" x="191.25 205.03" y="0" font-size="19.8" fill="#dcdcdc">05</text>
<text class="g" transform="translate(0 740.7) scale(0.7 1)" x="234.96 248.75" y="0" font-size="19.8" fill="#ffffff" font-weight="bold">06</text>
<text class="g" transform="translate(0 740.7) scale(0.7 1)" x="302.39 316.17" y="0" font-size="19.8" fill="#dcdcdc">09</text>
<text class="g" transform="translate(0 740.7) scale(0.7 1)" x="437.67 451.46" y="0" font-size="19.8" fill="#dcdcdc">10</text>
<text class="g" transform="translate(0 740.7) scale(0.7 1)" x="571.96 585.75" y="0" font-size="19.8" fill="#dcdcdc">11</text>
<text class="g" transform="translate(0 740.7) scale(0.7 1)" x="703.82 717.60" y="0" font-size="19.8" fill="#dcdcdc">12</text>
<text class="g" transform="translate(0 740.7) scale(0.7 1)" x="839.53 853.32" y="0" font-size="19.8" fill="#dcdcdc">13</text>
<text class="g" transform="translate(0 740.7) scale(0.7 1)" x="958.39 972.17" y="0" font-size="19.8" fill="#dcdcdc">14</text>
<text class="g" transform="translate(0 740.7) scale(0.7 1)" x="1091.96 1105.75" y="0" font-size="19.8" fill="#dcdcdc">15</text>
<text class="g" transform="translate(0 740.7) scale(0.7 1)" x="1181.96 1195.75" y="0" font-size="19.8" fill="#dcdcdc">17</text>
<text class="g" transform="translate(0 740.7) scale(0.7 1)" x="1299.53 1313.32" y="0" font-size="19.8" fill="#dcdcdc">18</text>
<text class="g" transform="translate(0 740.7) scale(0.7 1)" x="1424.25 1438.03" y="0" font-size="19.8" fill="#dcdcdc">19</text>
<text class="g" transform="translate(0 740.7) scale(0.7 1)" x="1548.39 1562.17" y="0" font-size="19.8" fill="#dcdcdc">20</text>
<text class="g" transform="translate(0 740.7) scale(0.7 1)" x="1671.67 1685.46" y="0" font-size="19.8" fill="#dcdcdc">21</text>
<text class="g" transform="translate(0 740.7) scale(0.7 1)" x="1807.67 1821.46" y="0" font-size="19.8" fill="#dcdcdc">22</text>
<text class="g" transform="translate(0 740.7) scale(0.7 1)" x="1943.82 1957.60" y="0" font-size="19.8" fill="#dcdcdc">23</text>
<text class="g" transform="translate(0 740.7) scale(0.7 1)" x="2076.67 2090.46" y="0" font-size="19.8" fill="#dcdcdc">00</text>
<text class="g" transform="translate(0 740.7) scale(0.7 1)" x="2204.53 2218.32" y="0" font-size="19.8" fill="#dcdcdc">01</text>
<text class="g" transform="translate(0 740.7) scale(0.7 1)" x="2329.39 2343.17" y="0" font-size="19.8" fill="#dcdcdc">02</text>
<text class="g" transform="translate(0 740.7) scale(0.7 1)" x="2449.96 2463.75" y="0" font-size="19.8" fill="#dcdcdc">03</text>
<text class="g" transform="translate(0 740.7) scale(0.7 1)" x="2534.82 2548.60" y="0" font-size="19.8" fill="#dcdcdc">04</text>
<text class="g" transform="translate(0 740.7) scale(0.7 1)" x="2646.53 2660.32" y="0" font-size="19.8" fill="#dcdcdc">05</text>
<text class="g" transform="translate(0 740.7) scale(0.7 1)" x="2684.53 2698.32" y="0" font-size="19.8" fill="#dcdcdc">06</text>
<text class="g" transform="translate(0 717.0) scale(0.7 1)" x="2075.96 2089.75" y="0" font-size="19.8" fill="#dcdcdc">30</text>
<text class="g" transform="translate(0 426.8) scale(0.7 1)" x="2728.25 2744.78 2755.82 2769.60 2783.39" y="0" font-size="19.8" fill="#dcdcdc">4,425</text>
<text class="g" transform="translate(0 531.1) scale(0.7 1)" x="2728.25 2744.78 2755.82 2769.60 2783.39" y="0" font-size="19.8" fill="#dcdcdc">4,400</text>
<text class="g" transform="translate(0 739.8) scale(0.7 1)" x="2728.25 2744.78 2755.82 2769.60 2783.39" y="0" font-size="19.8" fill="#dcdcdc">4,350</text>
<rect x="1906.4" y="614.0" width="93.6" height="34.4" fill="#d3d3d3"/>
<text class="g" transform="translate(0 635.8) scale(0.7 1)" x="2755.64 2772.53 2783.92 2798.07 2812.21" y="0" font-size="19.8" fill="#000" font-weight="bold">4,377</text>
<rect x="9.3" y="756.6" width="1990.7" height="313.4" fill="#1a1a1a"/>
<rect x="10.100000000000001" y="756.9" width="1896.4" height="289.49999999999994" fill="#000" stroke="#f4f4f4" stroke-width="1.8"/>

<text class="g" transform="translate(0 776.4) scale(0.7 1)" x="19.57" y="0" font-size="19.8" fill="#dcdcdc">[</text>
<text x="20.5" y="776.4" font-size="19.30" fill="#dcdcdc">金</text>
<text class="g" transform="translate(0 776.4) scale(0.7 1)" x="71.96 85.75 102.28 113.32 127.10" y="0" font-size="19.8" fill="#dcdcdc">26/04</text>
<text class="g" transform="translate(0 776.4) scale(0.7 1)" x="154.67 168.46 185.00 196.03 209.82 223.60" y="0" font-size="19.8" fill="#dcdcdc">15,307</text>
<text class="g" x="167.4" y="780.0" font-size="26" fill="#dcdcdc">×</text>
<text class="g" transform="translate(0 776.4) scale(0.7 1)" x="264.96 281.50 292.53 306.32 322.85" y="0" font-size="19.8" fill="#dcdcdc">1.00]</text>
<text x="232.8" y="776.4" font-size="19.30" fill="#dcdcdc">－</text>
<text class="g" transform="translate(0 776.4) scale(0.7 1)" x="364.21" y="0" font-size="19.8" fill="#dcdcdc">[</text>
<text x="261.7 281.0" y="776.4" font-size="19.30" fill="#dcdcdc">白金</text>
<text class="g" transform="translate(0 776.4) scale(0.7 1)" x="444.17 457.96 474.50 485.53 499.32" y="0" font-size="19.8" fill="#dcdcdc">26/04</text>
<text class="g" transform="translate(0 776.4) scale(0.7 1)" x="526.89 543.43 554.46 568.25 582.03" y="0" font-size="19.8" fill="#dcdcdc">4,377</text>
<text class="g" x="418.3" y="780.0" font-size="26" fill="#dcdcdc">×</text>
<text class="g" transform="translate(0 776.4) scale(0.7 1)" x="623.39 639.93 650.96 664.75 681.28" y="0" font-size="19.8" fill="#dcdcdc">1.00]</text>
<text x="493.3 512.6" y="776.4" font-size="19.30" fill="#dcdcdc">終値</text>
<text x="541.5 560.8" y="776.4" font-size="19.30" fill="#dcdcdc">時刻</text>
<text class="g" transform="translate(0 776.4) scale(0.7 1)" x="832.93 843.96 857.75 874.28 885.32 899.10" y="0" font-size="19.8" fill="#dcdcdc">:06:00</text>
<text class="g" transform="translate(0 776.4) scale(0.7 1)" x="926.67 940.46 957.00 968.03 981.82 995.60" y="0" font-size="19.8" fill="#dcdcdc">10,930</text>
<path d="M52 757.8V1045.5M131.7 757.8V1045.5M209.6 757.8V1045.5M303.6 757.8V1045.5M397.5 757.8V1045.5M489.6 757.8V1045.5M584.6 757.8V1045.5M667.6 757.8V1045.5M761.2 757.8V1045.5M824 757.8V1045.5M906.4 757.8V1045.5M993.8 757.8V1045.5M1081 757.8V1045.5M1167.2 757.8V1045.5M1262.8 757.8V1045.5M1358 757.8V1045.5M1451.2 757.8V1045.5M1540.8 757.8V1045.5M1628 757.8V1045.5M1712.6 757.8V1045.5M1772 757.8V1045.5M1850 757.8V1045.5M1901.8 757.8V1045.5M11.0 793.4H1905.6M11.0 863.7H1905.6M11.0 933.9H1905.6M11.0 1004.2H1905.6" stroke="#d6d6d6" stroke-width="1.6" stroke-dasharray="1.57 1.57" fill="none"/>
<path d="M187.6 757.8V1045.5" stroke="#d6d6d6" stroke-width="3.1" stroke-dasharray="1.57 1.57" fill="none"/>
<path d="M14.3 772.3 L15.9 777.9 L17.5 785.0 L19.1 787.8 L20.6 783.6 L22.2 785.0 L23.8 789.2 L25.3 792.0 L26.9 793.4 L28.5 787.8 L30.1 786.4 L31.6 785.0 L33.2 787.8 L34.8 785.0 L36.3 777.9 L37.9 779.3 L39.5 776.5 L41.1 779.3 L42.6 786.4 L44.2 785.0 L45.8 785.0 L47.3 786.4 L48.9 787.8 L50.5 789.2 L52.0 786.4 L53.6 793.4 L55.2 794.8 L56.8 792.0 L58.3 787.8 L59.9 787.8 L61.5 786.4 L63.0 786.4 L64.6 792.0 L66.2 786.4 L67.8 785.0 L69.3 785.0 L70.9 786.4 L72.5 786.4 L74.0 793.4 L75.6 801.8 L77.2 799.0 L78.8 796.2 L80.3 797.6 L81.9 797.6 L83.5 799.0 L85.0 799.0 L86.6 797.6 L88.2 797.6 L89.8 794.8 L91.3 793.4 L92.9 790.6 L94.5 789.2 L96.0 786.4 L97.6 786.4 L99.2 786.4 L100.8 793.4 L102.3 797.6 L103.9 796.2 L105.5 800.4 L107.0 800.4 L108.6 794.8 L110.2 793.4 L111.8 793.4 L113.3 794.8 L114.9 796.2 L116.5 796.2 L118.0 790.6 L119.6 794.8 L121.2 787.8 L122.7 790.6 L124.3 787.8 L125.9 783.6 L127.5 779.3 L129.0 779.3 L130.6 776.5 L132.2 783.6 L133.7 790.6 L135.3 793.4 L136.9 792.0 L138.5 792.0 L140.0 790.6 L141.6 790.6 L143.2 789.2 L144.7 789.2 L146.3 789.2 L147.9 786.4 L149.5 789.2 L151.0 797.6 L152.6 799.0 L154.2 800.4 L155.7 801.8 L157.3 803.2 L158.9 804.6 L160.5 806.1 L162.0 800.4 L163.6 797.6 L165.2 796.2 L166.7 799.0 L168.3 804.6 L169.9 808.9 L171.5 814.5 L173.0 817.3 L174.6 813.1 L176.2 818.7 L177.7 821.5 L179.3 827.1 L180.9 827.1 L182.4 824.3 L184.0 825.7 L185.6 827.1 L187.2 839.8 L188.7 835.6 L190.3 830.0 L191.9 835.6 L193.4 832.8 L195.0 832.8 L196.6 830.0 L198.2 828.5 L199.7 827.1 L201.3 830.0 L202.9 835.6 L204.4 839.8 L206.0 846.8 L207.6 849.6 L209.2 848.2 L210.7 845.4 L212.3 849.6 L213.9 851.0 L215.4 851.0 L217.0 851.0 L218.6 842.6 L220.2 845.4 L221.7 849.6 L223.3 852.5 L224.9 845.4 L226.4 845.4 L228.0 845.4 L229.6 844.0 L231.2 848.2 L232.7 853.9 L234.3 856.7 L235.9 848.2 L237.4 845.4 L239.0 844.0 L240.6 845.4 L242.2 845.4 L243.7 851.0 L245.3 855.3 L246.9 860.9 L248.4 863.7 L250.0 859.5 L251.6 856.7 L253.1 856.7 L254.7 855.3 L256.3 862.3 L257.9 870.7 L259.4 866.5 L261.0 866.5 L262.6 870.7 L264.1 870.7 L265.7 872.1 L267.3 876.4 L268.9 874.9 L270.4 867.9 L272.0 866.5 L273.6 869.3 L275.1 873.5 L276.7 876.4 L278.3 870.7 L279.9 869.3 L281.4 869.3 L283.0 867.9 L284.6 869.3 L286.1 877.8 L287.7 879.2 L289.3 877.8 L290.9 879.2 L292.4 886.2 L294.0 897.4 L295.6 903.1 L297.1 900.3 L298.7 889.0 L300.3 887.6 L301.9 882.0 L303.4 886.2 L305.0 882.0 L306.6 873.5 L308.1 870.7 L309.7 882.0 L311.3 894.6 L312.9 894.6 L314.4 891.8 L316.0 894.6 L317.6 904.5 L319.1 905.9 L320.7 894.6 L322.3 890.4 L323.8 884.8 L325.4 880.6 L327.0 883.4 L328.6 887.6 L330.1 886.2 L331.7 880.6 L333.3 874.9 L334.8 869.3 L336.4 869.3 L338.0 869.3 L339.6 866.5 L341.1 860.9 L342.7 863.7 L344.3 867.9 L345.8 877.8 L347.4 872.1 L349.0 872.1 L350.6 869.3 L352.1 865.1 L353.7 869.3 L355.3 867.9 L356.8 862.3 L358.4 852.5 L360.0 844.0 L361.6 835.6 L363.1 831.4 L364.7 834.2 L366.3 839.8 L367.8 849.6 L369.4 848.2 L371.0 862.3 L372.6 872.1 L374.1 874.9 L375.7 867.9 L377.3 873.5 L378.8 880.6 L380.4 880.6 L382.0 882.0 L383.6 887.6 L385.1 889.0 L386.7 890.4 L388.3 901.7 L389.8 908.7 L391.4 900.3 L393.0 893.2 L394.5 890.4 L396.1 890.4 L397.7 890.4 L399.3 889.0 L400.8 887.6 L402.4 880.6 L404.0 877.8 L405.5 882.0 L407.1 889.0 L408.7 886.2 L410.3 890.4 L411.8 893.2 L413.4 891.8 L415.0 887.6 L416.5 880.6 L418.1 890.4 L419.7 898.8 L421.3 897.4 L422.8 900.3 L424.4 905.9 L426.0 914.3 L427.5 911.5 L429.1 890.4 L430.7 887.6 L432.3 891.8 L433.8 893.2 L435.4 887.6 L437.0 890.4 L438.5 897.4 L440.1 901.7 L441.7 893.2 L443.3 897.4 L444.8 894.6 L446.4 890.4 L448.0 886.2 L449.5 882.0 L451.1 880.6 L452.7 880.6 L454.3 879.2 L455.8 891.8 L457.4 900.3 L459.0 897.4 L460.5 894.6 L462.1 889.0 L463.7 890.4 L465.2 894.6 L466.8 889.0 L468.4 889.0 L470.0 896.0 L471.5 889.0 L473.1 884.8 L474.7 889.0 L476.2 897.4 L477.8 900.3 L479.4 901.7 L481.0 908.7 L482.5 917.1 L484.1 921.3 L485.7 929.8 L487.2 927.0 L488.8 928.4 L490.4 935.4 L492.0 936.8 L493.5 936.8 L495.1 941.0 L496.7 939.6 L498.2 953.7 L499.8 964.9 L501.4 955.1 L503.0 943.8 L504.5 955.1 L506.1 956.5 L507.7 963.5 L509.2 972.0 L510.8 969.1 L512.4 970.6 L514.0 970.6 L515.5 974.8 L517.1 980.4 L518.7 974.8 L520.2 987.4 L521.8 976.2 L523.4 974.8 L524.9 964.9 L526.5 959.3 L528.1 955.1 L529.7 955.1 L531.2 949.5 L532.8 953.7 L534.4 955.1 L535.9 953.7 L537.5 966.3 L539.1 962.1 L540.7 960.7 L542.2 952.3 L543.8 949.5 L545.4 949.5 L546.9 946.7 L548.5 948.1 L550.1 946.7 L551.7 941.0 L553.2 943.8 L554.8 948.1 L556.4 945.2 L557.9 945.2 L559.5 943.8 L561.1 949.5 L562.7 953.7 L564.2 962.1 L565.8 956.5 L567.4 956.5 L568.9 959.3 L570.5 962.1 L572.1 972.0 L573.7 963.5 L575.2 959.3 L576.8 963.5 L578.4 964.9 L579.9 969.1 L581.5 966.3 L583.1 955.1 L584.7 948.1 L586.2 950.9 L587.8 950.9 L589.4 943.8 L590.9 946.7 L592.5 942.4 L594.1 945.2 L595.6 943.8 L597.2 939.6 L598.8 936.8 L600.4 943.8 L601.9 943.8 L603.5 942.4 L605.1 945.2 L606.6 950.9 L608.2 946.7 L609.8 949.5 L611.4 950.9 L612.9 952.3 L614.5 955.1 L616.1 952.3 L617.6 955.1 L619.2 950.9 L620.8 945.2 L622.4 945.2 L623.9 946.7 L625.5 939.6 L627.1 939.6 L628.6 941.0 L630.2 946.7 L631.8 942.4 L633.4 942.4 L634.9 941.0 L636.5 942.4 L638.1 939.6 L639.6 941.0 L641.2 939.6 L642.8 943.8 L644.4 948.1 L645.9 948.1 L647.5 952.3 L649.1 946.7 L650.6 956.5 L652.2 959.3 L653.8 960.7 L655.4 950.9 L656.9 957.9 L658.5 959.3 L660.1 962.1 L661.6 969.1 L663.2 970.6 L664.8 972.0 L666.3 964.9 L667.9 959.3 L669.5 959.3 L671.1 956.5 L672.6 957.9 L674.2 964.9 L675.8 959.3 L677.3 957.9 L678.9 957.9 L680.5 959.3 L682.1 956.5 L683.6 952.3 L685.2 953.7 L686.8 962.1 L688.3 964.9 L689.9 972.0 L691.5 979.0 L693.1 988.8 L694.6 994.5 L696.2 993.1 L697.8 993.1 L699.3 994.5 L700.9 993.1 L702.5 987.4 L704.1 987.4 L705.6 986.0 L707.2 987.4 L708.8 980.4 L710.3 969.1 L711.9 980.4 L713.5 977.6 L715.1 976.2 L716.6 973.4 L718.2 969.1 L719.8 972.0 L721.3 970.6 L722.9 969.1 L724.5 969.1 L726.1 959.3 L727.6 957.9 L729.2 953.7 L730.8 952.3 L732.3 948.1 L733.9 946.7 L735.5 942.4 L737.0 948.1 L738.6 939.6 L740.2 943.8 L741.8 939.6 L743.3 945.2 L744.9 952.3 L746.5 949.5 L748.0 953.7 L749.6 952.3 L751.2 952.3 L752.8 952.3 L754.3 950.9 L755.9 952.3 L757.5 959.3 L759.0 957.9 L760.6 964.9 L762.2 969.1 L763.8 957.9 L765.3 962.1 L766.9 962.1 L768.5 957.9 L770.0 957.9 L771.6 956.5 L773.2 955.1 L774.8 956.5 L776.3 952.3 L777.9 955.1 L779.5 952.3 L781.0 949.5 L782.6 949.5 L784.2 949.5 L785.8 948.1 L787.3 952.3 L788.9 946.7 L790.5 952.3 L792.0 949.5 L793.6 945.2 L795.2 948.1 L796.8 952.3 L798.3 950.9 L799.9 950.9 L801.5 945.2 L803.0 934.0 L804.6 927.0 L806.2 919.9 L807.7 918.5 L809.3 917.1 L810.9 921.3 L812.5 922.8 L814.0 918.5 L815.6 922.8 L817.2 925.6 L818.7 929.8 L820.3 929.8 L821.9 928.4 L823.5 919.9 L825.0 910.1 L826.6 905.9 L828.2 908.7 L829.7 918.5 L831.3 925.6 L832.9 925.6 L834.5 927.0 L836.0 925.6 L837.6 925.6 L839.2 921.3 L840.7 921.3 L842.3 918.5 L843.9 927.0 L845.5 918.5 L847.0 917.1 L848.6 914.3 L850.2 911.5 L851.7 918.5 L853.3 915.7 L854.9 922.8 L856.5 924.2 L858.0 921.3 L859.6 929.8 L861.2 929.8 L862.7 929.8 L864.3 925.6 L865.9 924.2 L867.4 924.2 L869.0 925.6 L870.6 928.4 L872.2 931.2 L873.7 936.8 L875.3 939.6 L876.9 939.6 L878.4 938.2 L880.0 936.8 L881.6 938.2 L883.2 938.2 L884.7 938.2 L886.3 932.6 L887.9 938.2 L889.4 943.8 L891.0 929.8 L892.6 925.6 L894.2 928.4 L895.7 929.8 L897.3 938.2 L898.9 932.6 L900.4 932.6 L902.0 931.2 L903.6 936.8 L905.2 942.4 L906.7 946.7 L908.3 942.4 L909.9 939.6 L911.4 945.2 L913.0 949.5 L914.6 950.9 L916.2 946.7 L917.7 950.9 L919.3 948.1 L920.9 946.7 L922.4 942.4 L924.0 939.6 L925.6 935.4 L927.2 931.2 L928.7 935.4 L930.3 942.4 L931.9 945.2 L933.4 969.1 L935.0 957.9 L936.6 945.2 L938.1 945.2 L939.7 938.2 L941.3 938.2 L942.9 936.8 L944.4 932.6 L946.0 939.6 L947.6 938.2 L949.1 936.8 L950.7 939.6 L952.3 938.2 L953.9 939.6 L955.4 938.2 L957.0 934.0 L958.6 929.8 L960.1 927.0 L961.7 935.4 L963.3 934.0 L964.9 932.6 L966.4 934.0 L968.0 939.6 L969.6 936.8 L971.1 943.8 L972.7 948.1 L974.3 946.7 L975.9 946.7 L977.4 945.2 L979.0 946.7 L980.6 948.1 L982.1 942.4 L983.7 946.7 L985.3 946.7 L986.9 953.7 L988.4 945.2 L990.0 942.4 L991.6 945.2 L993.1 948.1 L994.7 953.7 L996.3 952.3 L997.9 949.5 L999.4 945.2 L1001.0 945.2 L1002.6 945.2 L1004.1 938.2 L1005.7 938.2 L1007.3 928.4 L1008.8 934.0 L1010.4 938.2 L1012.0 945.2 L1013.6 942.4 L1015.1 949.5 L1016.7 955.1 L1018.3 957.9 L1019.8 964.9 L1021.4 970.6 L1023.0 969.1 L1024.6 963.5 L1026.1 957.9 L1027.7 962.1 L1029.3 966.3 L1030.8 959.3 L1032.4 960.7 L1034.0 966.3 L1035.6 964.9 L1037.1 967.7 L1038.7 972.0 L1040.3 960.7 L1041.8 957.9 L1043.4 960.7 L1045.0 962.1 L1046.6 950.9 L1048.1 955.1 L1049.7 952.3 L1051.3 953.7 L1052.8 955.1 L1054.4 953.7 L1056.0 950.9 L1057.6 946.7 L1059.1 942.4 L1060.7 939.6 L1062.3 938.2 L1063.8 945.2 L1065.4 943.8 L1067.0 943.8 L1068.6 939.6 L1070.1 934.0 L1071.7 929.8 L1073.3 935.4 L1074.8 942.4 L1076.4 942.4 L1078.0 943.8 L1079.5 946.7 L1081.1 941.0 L1082.7 948.1 L1084.3 955.1 L1085.8 955.1 L1087.4 956.5 L1089.0 960.7 L1090.5 959.3 L1092.1 952.3 L1093.7 950.9 L1095.3 946.7 L1096.8 945.2 L1098.4 943.8 L1100.0 952.3 L1101.5 955.1 L1103.1 957.9 L1104.7 960.7 L1106.3 960.7 L1107.8 956.5 L1109.4 964.9 L1111.0 967.7 L1112.5 970.6 L1114.1 962.1 L1115.7 962.1 L1117.3 959.3 L1118.8 953.7 L1120.4 948.1 L1122.0 945.2 L1123.5 945.2 L1125.1 946.7 L1126.7 949.5 L1128.3 948.1 L1129.8 948.1 L1131.4 943.8 L1133.0 945.2 L1134.5 948.1 L1136.1 953.7 L1137.7 955.1 L1139.2 952.3 L1140.8 957.9 L1142.4 956.5 L1144.0 953.7 L1145.5 963.5 L1147.1 963.5 L1148.7 959.3 L1150.2 962.1 L1151.8 966.3 L1153.4 977.6 L1155.0 973.4 L1156.5 963.5 L1158.1 969.1 L1159.7 963.5 L1161.2 976.2 L1162.8 973.4 L1164.4 969.1 L1166.0 967.7 L1167.5 967.7 L1169.1 966.3 L1170.7 966.3 L1172.2 970.6 L1173.8 974.8 L1175.4 977.6 L1177.0 974.8 L1178.5 973.4 L1180.1 977.6 L1181.7 986.0 L1183.2 980.4 L1184.8 976.2 L1186.4 981.8 L1188.0 983.2 L1189.5 981.8 L1191.1 979.0 L1192.7 979.0 L1194.2 983.2 L1195.8 979.0 L1197.4 986.0 L1199.0 972.0 L1200.5 977.6 L1202.1 983.2 L1203.7 991.6 L1205.2 983.2 L1206.8 981.8 L1208.4 979.0 L1209.9 976.2 L1211.5 974.8 L1213.1 969.1 L1214.7 966.3 L1216.2 960.7 L1217.8 962.1 L1219.4 969.1 L1220.9 983.2 L1222.5 984.6 L1224.1 990.2 L1225.7 991.6 L1227.2 994.5 L1228.8 1001.5 L1230.4 991.6 L1231.9 984.6 L1233.5 973.4 L1235.1 977.6 L1236.7 977.6 L1238.2 988.8 L1239.8 993.1 L1241.4 991.6 L1242.9 1001.5 L1244.5 998.7 L1246.1 993.1 L1247.7 988.8 L1249.2 988.8 L1250.8 977.6 L1252.4 980.4 L1253.9 979.0 L1255.5 983.2 L1257.1 983.2 L1258.7 984.6 L1260.2 980.4 L1261.8 977.6 L1263.4 984.6 L1264.9 981.8 L1266.5 981.8 L1268.1 981.8 L1269.7 967.7 L1271.2 974.8 L1272.8 984.6 L1274.4 974.8 L1275.9 969.1 L1277.5 966.3 L1279.1 959.3 L1280.6 956.5 L1282.2 950.9 L1283.8 950.9 L1285.4 950.9 L1286.9 950.9 L1288.5 953.7 L1290.1 957.9 L1291.6 963.5 L1293.2 963.5 L1294.8 962.1 L1296.4 962.1 L1297.9 962.1 L1299.5 970.6 L1301.1 973.4 L1302.6 972.0 L1304.2 973.4 L1305.8 969.1 L1307.4 970.6 L1308.9 963.5 L1310.5 962.1 L1312.1 964.9 L1313.6 969.1 L1315.2 972.0 L1316.8 972.0 L1318.4 962.1 L1319.9 962.1 L1321.5 967.7 L1323.1 955.1 L1324.6 950.9 L1326.2 953.7 L1327.8 956.5 L1329.4 956.5 L1330.9 964.9 L1332.5 974.8 L1334.1 988.8 L1335.6 994.5 L1337.2 1005.7 L1338.8 1014.1 L1340.4 1021.2 L1341.9 1031.0 L1343.5 1021.2 L1345.1 1015.5 L1346.6 1007.1 L1348.2 1002.9 L1349.8 1001.5 L1351.3 1000.1 L1352.9 998.7 L1354.5 994.5 L1356.1 991.6 L1357.6 993.1 L1359.2 1004.3 L1360.8 1018.4 L1362.3 1012.7 L1363.9 1004.3 L1365.5 1009.9 L1367.1 1015.5 L1368.6 1009.9 L1370.2 1012.7 L1371.8 1009.9 L1373.3 998.7 L1374.9 993.1 L1376.5 988.8 L1378.1 986.0 L1379.6 981.8 L1381.2 973.4 L1382.8 980.4 L1384.3 979.0 L1385.9 979.0 L1387.5 977.6 L1389.1 979.0 L1390.6 973.4 L1392.2 969.1 L1393.8 969.1 L1395.3 963.5 L1396.9 960.7 L1398.5 955.1 L1400.1 949.5 L1401.6 942.4 L1403.2 935.4 L1404.8 931.2 L1406.3 936.8 L1407.9 945.2 L1409.5 943.8 L1411.1 941.0 L1412.6 939.6 L1414.2 938.2 L1415.8 932.6 L1417.3 931.2 L1418.9 932.6 L1420.5 928.4 L1422.0 924.2 L1423.6 924.2 L1425.2 921.3 L1426.8 917.1 L1428.3 911.5 L1429.9 904.5 L1431.5 911.5 L1433.0 904.5 L1434.6 914.3 L1436.2 907.3 L1437.8 903.1 L1439.3 897.4 L1440.9 900.3 L1442.5 898.8 L1444.0 891.8 L1445.6 894.6 L1447.2 894.6 L1448.8 898.8 L1450.3 907.3 L1451.9 908.7 L1453.5 904.5 L1455.0 917.1 L1456.6 922.8 L1458.2 922.8 L1459.8 928.4 L1461.3 936.8 L1462.9 932.6 L1464.5 931.2 L1466.0 935.4 L1467.6 942.4 L1469.2 950.9 L1470.8 962.1 L1472.3 966.3 L1473.9 969.1 L1475.5 969.1 L1477.0 967.7 L1478.6 967.7 L1480.2 973.4 L1481.7 969.1 L1483.3 970.6 L1484.9 966.3 L1486.5 970.6 L1488.0 967.7 L1489.6 973.4 L1491.2 972.0 L1492.7 966.3 L1494.3 972.0 L1495.9 963.5 L1497.5 962.1 L1499.0 962.1 L1500.6 955.1 L1502.2 955.1 L1503.7 955.1 L1505.3 952.3 L1506.9 955.1 L1508.5 955.1 L1510.0 963.5 L1511.6 963.5 L1513.2 959.3 L1514.7 966.3 L1516.3 973.4 L1517.9 980.4 L1519.5 983.2 L1521.0 984.6 L1522.6 981.8 L1524.2 979.0 L1525.7 967.7 L1527.3 970.6 L1528.9 966.3 L1530.5 966.3 L1532.0 959.3 L1533.6 950.9 L1535.2 950.9 L1536.7 950.9 L1538.3 950.9 L1539.9 956.5 L1541.5 952.3 L1543.0 941.0 L1544.6 943.8 L1546.2 938.2 L1547.7 934.0 L1549.3 939.6 L1550.9 934.0 L1552.4 936.8 L1554.0 946.7 L1555.6 945.2 L1557.2 942.4 L1558.7 938.2 L1560.3 936.8 L1561.9 936.8 L1563.4 932.6 L1565.0 932.6 L1566.6 932.6 L1568.2 936.8 L1569.7 939.6 L1571.3 942.4 L1572.9 942.4 L1574.4 935.4 L1576.0 934.0 L1577.6 932.6 L1579.2 934.0 L1580.7 936.8 L1582.3 938.2 L1583.9 924.2 L1585.4 929.8 L1587.0 928.4 L1588.6 927.0 L1590.2 925.6 L1591.7 927.0 L1593.3 927.0 L1594.9 928.4 L1596.4 924.2 L1598.0 917.1 L1599.6 904.5 L1601.2 901.7 L1602.7 901.7 L1604.3 896.0 L1605.9 891.8 L1607.4 890.4 L1609.0 887.6 L1610.6 890.4 L1612.2 891.8 L1613.7 886.2 L1615.3 884.8 L1616.9 883.4 L1618.4 883.4 L1620.0 880.6 L1621.6 876.4 L1623.1 879.2 L1624.7 889.0 L1626.3 886.2 L1627.9 887.6 L1629.4 886.2 L1631.0 890.4 L1632.6 893.2 L1634.1 894.6 L1635.7 897.4 L1637.3 891.8 L1638.9 887.6 L1640.4 886.2 L1642.0 884.8 L1643.6 884.8 L1645.1 889.0 L1646.7 891.8 L1648.3 893.2 L1649.9 896.0 L1651.4 898.8 L1653.0 896.0 L1654.6 891.8 L1656.1 893.2 L1657.7 896.0 L1659.3 898.8 L1660.9 903.1 L1662.4 903.1 L1664.0 903.1 L1665.6 900.3 L1667.1 903.1 L1668.7 904.5 L1670.3 907.3 L1671.9 907.3 L1673.4 910.1 L1675.0 907.3 L1676.6 900.3 L1678.1 898.8 L1679.7 900.3 L1681.3 907.3 L1682.9 905.9 L1684.4 901.7 L1686.0 900.3 L1687.6 901.7 L1689.1 903.1 L1690.7 904.5 L1692.3 904.5 L1693.8 905.9 L1695.4 905.9 L1697.0 908.7 L1698.6 908.7 L1700.1 910.1 L1701.7 917.1 L1703.3 917.1 L1704.8 915.7 L1706.4 917.1 L1708.0 919.9 L1709.6 922.8 L1711.1 924.2 L1712.7 941.0 L1714.3 945.2 L1715.8 932.6 L1717.4 943.8 L1719.0 946.7 L1720.6 935.4 L1722.1 935.4 L1723.7 922.8 L1725.3 921.3 L1726.8 919.9 L1728.4 917.1 L1730.0 915.7 L1731.6 915.7 L1733.1 917.1 L1734.7 919.9 L1736.3 915.7 L1737.8 919.9 L1739.4 924.2 L1741.0 927.0 L1742.6 929.8 L1744.1 927.0 L1745.7 925.6 L1747.3 925.6 L1748.8 924.2 L1750.4 921.3 L1752.0 919.9 L1753.5 922.8 L1755.1 919.9 L1756.7 918.5 L1758.3 915.7 L1759.8 912.9 L1761.4 910.1 L1763.0 910.1 L1764.5 908.7 L1766.1 908.7 L1767.7 905.9 L1769.3 911.5 L1770.8 912.9 L1772.4 901.7 L1774.0 897.4 L1775.5 894.6 L1777.1 880.6 L1778.7 891.8 L1780.3 889.0 L1781.8 890.4 L1783.4 894.6 L1785.0 894.6 L1786.5 896.0 L1788.1 894.6 L1789.7 896.0 L1791.3 893.2 L1792.8 896.0 L1794.4 893.2 L1796.0 890.4 L1797.5 891.8 L1799.1 896.0 L1800.7 904.5 L1802.3 903.1 L1803.8 897.4 L1805.4 891.8 L1807.0 891.8 L1808.5 887.6 L1810.1 886.2 L1811.7 886.2 L1813.3 889.0 L1814.8 891.8 L1816.4 890.4 L1818.0 889.0 L1819.5 886.2 L1821.1 886.2 L1822.7 886.2 L1824.2 890.4 L1825.8 887.6 L1827.4 886.2 L1829.0 890.4 L1830.5 890.4 L1832.1 890.4 L1833.7 889.0 L1835.2 891.8 L1836.8 900.3 L1838.4 900.3 L1840.0 898.8 L1841.5 896.0 L1843.1 894.6 L1844.7 893.2 L1846.2 889.0 L1847.8 891.8 L1849.4 889.0 L1851.0 887.6 L1852.5 886.2 L1854.1 883.4 L1855.7 880.6 L1857.2 877.8 L1858.8 882.0 L1860.4 879.2 L1862.0 877.8 L1863.5 880.6 L1865.1 882.0 L1866.7 884.8 L1868.2 886.2 L1869.8 886.2 L1871.4 887.6 L1873.0 889.0 L1874.5 886.2 L1876.1 890.4 L1877.7 894.6 L1879.2 891.8 L1880.8 896.0 L1882.4 900.3 L1884.0 897.4 L1885.5 894.6 L1887.1 891.8 L1888.7 889.0 L1890.2 889.0 L1891.8 891.8 L1893.4 894.6 L1894.9 896.0 L1896.5 894.6 L1898.1 898.8 L1899.7 901.7 L1901.2 907.3 L1902.8 905.9 L1905.0 891.7" stroke="#ff0000" stroke-width="3.0" fill="none" stroke-linejoin="miter" stroke-linecap="butt"/>
<text class="g" transform="translate(0 1062.6) scale(0.7 1)" x="77.67 91.46" y="0" font-size="19.8" fill="#dcdcdc">04</text>
<text class="g" transform="translate(0 1062.6) scale(0.7 1)" x="191.25 205.03" y="0" font-size="19.8" fill="#dcdcdc">05</text>
<text class="g" transform="translate(0 1062.6) scale(0.7 1)" x="234.96 248.75" y="0" font-size="19.8" fill="#ffffff" font-weight="bold">06</text>
<text class="g" transform="translate(0 1062.6) scale(0.7 1)" x="302.39 316.17" y="0" font-size="19.8" fill="#dcdcdc">09</text>
<text class="g" transform="translate(0 1062.6) scale(0.7 1)" x="437.67 451.46" y="0" font-size="19.8" fill="#dcdcdc">10</text>
<text class="g" transform="translate(0 1062.6) scale(0.7 1)" x="571.96 585.75" y="0" font-size="19.8" fill="#dcdcdc">11</text>
<text class="g" transform="translate(0 1062.6) scale(0.7 1)" x="703.82 717.60" y="0" font-size="19.8" fill="#dcdcdc">12</text>
<text class="g" transform="translate(0 1062.6) scale(0.7 1)" x="839.53 853.32" y="0" font-size="19.8" fill="#dcdcdc">13</text>
<text class="g" transform="translate(0 1062.6) scale(0.7 1)" x="958.39 972.17" y="0" font-size="19.8" fill="#dcdcdc">14</text>
<text class="g" transform="translate(0 1062.6) scale(0.7 1)" x="1091.96 1105.75" y="0" font-size="19.8" fill="#dcdcdc">15</text>
<text class="g" transform="translate(0 1062.6) scale(0.7 1)" x="1181.96 1195.75" y="0" font-size="19.8" fill="#dcdcdc">17</text>
<text class="g" transform="translate(0 1062.6) scale(0.7 1)" x="1299.53 1313.32" y="0" font-size="19.8" fill="#dcdcdc">18</text>
<text class="g" transform="translate(0 1062.6) scale(0.7 1)" x="1424.25 1438.03" y="0" font-size="19.8" fill="#dcdcdc">19</text>
<text class="g" transform="translate(0 1062.6) scale(0.7 1)" x="1548.39 1562.17" y="0" font-size="19.8" fill="#dcdcdc">20</text>
<text class="g" transform="translate(0 1062.6) scale(0.7 1)" x="1671.67 1685.46" y="0" font-size="19.8" fill="#dcdcdc">21</text>
<text class="g" transform="translate(0 1062.6) scale(0.7 1)" x="1807.67 1821.46" y="0" font-size="19.8" fill="#dcdcdc">22</text>
<text class="g" transform="translate(0 1062.6) scale(0.7 1)" x="1943.82 1957.60" y="0" font-size="19.8" fill="#dcdcdc">23</text>
<text class="g" transform="translate(0 1062.6) scale(0.7 1)" x="2076.67 2090.46" y="0" font-size="19.8" fill="#dcdcdc">00</text>
<text class="g" transform="translate(0 1062.6) scale(0.7 1)" x="2204.53 2218.32" y="0" font-size="19.8" fill="#dcdcdc">01</text>
<text class="g" transform="translate(0 1062.6) scale(0.7 1)" x="2329.39 2343.17" y="0" font-size="19.8" fill="#dcdcdc">02</text>
<text class="g" transform="translate(0 1062.6) scale(0.7 1)" x="2449.96 2463.75" y="0" font-size="19.8" fill="#dcdcdc">03</text>
<text class="g" transform="translate(0 1062.6) scale(0.7 1)" x="2534.82 2548.60" y="0" font-size="19.8" fill="#dcdcdc">04</text>
<text class="g" transform="translate(0 1062.6) scale(0.7 1)" x="2646.53 2660.32" y="0" font-size="19.8" fill="#dcdcdc">05</text>
<text class="g" transform="translate(0 1062.6) scale(0.7 1)" x="2684.53 2698.32" y="0" font-size="19.8" fill="#dcdcdc">06</text>
<text class="g" transform="translate(0 1038.9) scale(0.7 1)" x="2075.96 2089.75" y="0" font-size="19.8" fill="#dcdcdc">30</text>
<text class="g" transform="translate(0 790.2) scale(0.7 1)" x="2728.25 2742.03 2758.57 2769.60 2783.39 2797.17" y="0" font-size="19.8" fill="#dcdcdc">11,000</text>
<text class="g" transform="translate(0 860.5) scale(0.7 1)" x="2728.25 2742.03 2758.57 2769.60 2783.39 2797.17" y="0" font-size="19.8" fill="#dcdcdc">10,950</text>
<text class="g" transform="translate(0 930.7) scale(0.7 1)" x="2728.25 2742.03 2758.57 2769.60 2783.39 2797.17" y="0" font-size="19.8" fill="#dcdcdc">10,900</text>
<text class="g" transform="translate(0 1001.0) scale(0.7 1)" x="2728.25 2742.03 2758.57 2769.60 2783.39 2797.17" y="0" font-size="19.8" fill="#dcdcdc">10,850</text>
<text class="g" transform="translate(0 1071.3) scale(0.7 1)" x="2728.25 2742.03 2758.57 2769.60 2783.39 2797.17" y="0" font-size="19.8" fill="#dcdcdc">10,800</text>
<rect x="1906.4" y="874.6" width="93.6" height="34.4" fill="#d3d3d3"/>
<text class="g" transform="translate(0 896.4) scale(0.7 1)" x="2748.57 2762.71 2779.60 2791.00 2805.14 2819.28" y="0" font-size="19.8" fill="#000" font-weight="bold">10,930</text>
<rect x="1906" y="1070" width="94" height="5.2" fill="#d0d0d0"/><rect x="1906" y="1075.2" width="98" height="2" fill="#a4a4a4"/><rect x="1906" y="1077.2" width="98" height="3" fill="#f4f4f9"/>
<g class="ui">
<rect x="16" y="9" width="21" height="21" fill="#f4f4f4"/>
<path d="M17 12.5H36M17 15.5H36M17 18.5H36M17 21.5H36M17 24.5H36M17 27.3H36" stroke="#dcdcdc" stroke-width="0.8"/>
<path d="M16.2 8.6V30H37.2" stroke="#7a7a7a" stroke-width="1.7" fill="none"/>
<rect x="19.9" y="18" width="3" height="9.6" fill="#ff0000"/><rect x="23" y="11.4" width="3.2" height="14" fill="#0a84e8"/><rect x="26.4" y="9.9" width="3.2" height="11.4" fill="#ff0000"/><rect x="29.6" y="13.2" width="3" height="9.8" fill="#0a84e8"/><rect x="32.6" y="11.7" width="2.6" height="12.8" fill="#ff0000"/><rect x="34.6" y="15.5" width="1.6" height="5" fill="#ff0000"/>
<text transform="translate(0 25.9) scale(0.68 1)" x="99.56 165.74 174.85 189.41 203.24 216.91 245.44 258.53 271.18 283.09 293.68 300.00 313.82" y="0" font-size="19.6" fill="#000" stroke="#000" stroke-width="0.5">1[202604]1.00</text>
<text transform="translate(0 25.9) scale(1.15 1)" x="137.04" y="0" font-size="19.6" fill="#000">/</text>
<text transform="translate(0 26.4) scale(0.94 1)" x="79.79 99.26" y="0" font-size="18.3" fill="#000" font-family="'Liberation Sans','IPAGothic',sans-serif" stroke="#000" stroke-width="0.35">分足</text>
<text transform="translate(0 26.4) scale(0.94 1)" x="49.15" y="0" font-size="18.3" fill="#000" font-family="'Liberation Sans','IPAGothic',sans-serif" stroke="#000" stroke-width="0.35">金</text>
<text transform="translate(0 25.9) scale(0.68 1)" x="417.35 483.53 492.65 507.21 521.03 534.71 563.24 576.32 588.97 600.88 611.47 617.79 631.62" y="0" font-size="19.6" fill="#000" stroke="#000" stroke-width="0.5">1[202604]1.00</text>
<text transform="translate(0 25.9) scale(1.15 1)" x="324.96" y="0" font-size="19.6" fill="#000">/</text>
<text transform="translate(0 26.4) scale(0.94 1)" x="309.68 329.15" y="0" font-size="18.3" fill="#000" font-family="'Liberation Sans','IPAGothic',sans-serif" stroke="#000" stroke-width="0.35">分足</text>
<text transform="translate(0 26.4) scale(0.94 1)" x="279.04" y="0" font-size="18.3" fill="#000" font-family="'Liberation Sans','IPAGothic',sans-serif" stroke="#000" stroke-width="0.35">金</text>
<text transform="translate(0 26.4) scale(0.94 1)" x="259.57" y="0" font-size="18.3" fill="#000" font-family="'Liberation Sans','IPAGothic',sans-serif" stroke="#000" stroke-width="0.35">白</text>
<text transform="translate(0 24.3) scale(1.25 1)" x="181.84" y="0" font-size="19.6" fill="#000">-</text>
<g fill="#fdfdfd" stroke="#5a5a5a" stroke-width="1.5"><rect x="1877" y="10" width="15.5" height="19.6"/><rect x="1883.2" y="14.6" width="14" height="10.2"/></g>
<path d="M1877 10.4H1892.5M1883.2 15.4H1897.2" stroke="#5a5a5a" stroke-width="2.4"/>
<path d="M1887.8 15V24.6M1892.4 15V24.6M1883.4 18.6H1897M1883.4 21.6H1897" stroke="#c8c8c8" stroke-width="0.9"/>
<rect x="1911" y="6.3" width="26.4" height="26.6" rx="4.2" fill="url(#btn)" stroke="#a2a2a2" stroke-width="1.4"/>
<rect x="1942.2" y="6.3" width="26.4" height="26.6" rx="4.2" fill="url(#btn)" stroke="#a2a2a2" stroke-width="1.4"/>
<rect x="1973.4" y="6.3" width="26.4" height="26.6" rx="4.2" fill="url(#btn)" stroke="#a2a2a2" stroke-width="1.4"/>
<rect x="1918.4" y="23" width="8.9" height="2.7" fill="#5c5c5c"/>
<rect x="1950.3" y="15.4" width="10.6" height="9.6" fill="none" stroke="#5c5c5c" stroke-width="1.6"/><rect x="1949.5" y="14" width="12.2" height="2.8" fill="#5c5c5c"/>
<path d="M1981 14.2L1992.6 25.6M1992.6 14.2L1981 25.6" stroke="#5c5c5c" stroke-width="2.3" fill="none"/>
<text transform="translate(0 62.3) scale(0.94 1)" x="17.87" y="0" font-size="18.6" fill="#1c1c1c" font-family="'Liberation Sans','IPAGothic',sans-serif">金</text>
<text x="53.3" y="62" font-size="17.6" fill="#1c1c1c">2026/04</text>
<text transform="translate(0 62.3) scale(0.94 1)" x="236.81 256.38" y="0" font-size="18.6" fill="#1c1c1c" font-family="'Liberation Sans','IPAGothic',sans-serif">白金</text>
<text x="276" y="62" font-size="17.6" fill="#1c1c1c">2026/04</text>
<text transform="translate(0 62.3) scale(0.94 1)" x="473.83 492.77" y="0" font-size="18.2" fill="#1c1c1c" font-family="'Liberation Sans','IPAGothic',sans-serif">分足</text>
<text x="588" y="62" font-size="17.6" fill="#1c1c1c">1</text>
<text transform="translate(0 62.3) scale(0.94 1)" x="635.32 654.26" y="0" font-size="18.2" fill="#1c1c1c" font-family="'Liberation Sans','IPAGothic',sans-serif">分足</text>
<rect x="127.2" y="40.9" width="76.8" height="27.6" fill="#ffffff"/>
<path d="M127.2 68.4V40.9H204.0V68.4" fill="none" stroke="#a4a8b6" stroke-width="1.3"/>
<rect x="179.8" y="43.4" width="21" height="21.2" fill="#f3f3f3"/>
<path d="M179.8 43.4V64.6M200.8 43.4V64.6" stroke="#b4b4b4" stroke-width="1.2"/>
<path d="M179.8 53.9H200.8M179.8 64.4H200.8" stroke="#bcbcbc" stroke-width="1.2"/>
<path d="M185.8 50.8L190.20000000000002 45.8L194.60000000000002 50.8ZM185.8 57.1L190.20000000000002 62L194.60000000000002 57.1Z" fill="#000"/>
<text transform="translate(0 58.9) scale(0.61 1)" x="214.59 229.34 236.23 250.98" y="0" font-size="20.8" fill="#000">1.00</text>
<rect x="350.0" y="40.9" width="76.8" height="27.6" fill="#ffffff"/>
<path d="M350.0 68.4V40.9H426.8V68.4" fill="none" stroke="#a4a8b6" stroke-width="1.3"/>
<rect x="402.6" y="43.4" width="21" height="21.2" fill="#f3f3f3"/>
<path d="M402.6 43.4V64.6M423.6 43.4V64.6" stroke="#b4b4b4" stroke-width="1.2"/>
<path d="M402.6 53.9H423.6M402.6 64.4H423.6" stroke="#bcbcbc" stroke-width="1.2"/>
<path d="M408.6 50.8L413.0 45.8L417.4 50.8ZM408.6 57.1L413.0 62L417.4 57.1Z" fill="#000"/>
<text transform="translate(0 58.9) scale(0.61 1)" x="579.84 594.59 601.48 616.23" y="0" font-size="20.8" fill="#000">1.00</text>
<rect x="506.4" y="40.9" width="71.8" height="27.6" fill="#ffffff"/>
<path d="M506.4 68.4V40.9H578.1999999999999V68.4" fill="none" stroke="#a4a8b6" stroke-width="1.3"/>
<rect x="553.9999999999999" y="43.4" width="21" height="21.2" fill="#f3f3f3"/>
<path d="M553.9999999999999 43.4V64.6M574.9999999999999 43.4V64.6" stroke="#b4b4b4" stroke-width="1.2"/>
<path d="M553.9999999999999 53.9H574.9999999999999M553.9999999999999 64.4H574.9999999999999" stroke="#bcbcbc" stroke-width="1.2"/>
<path d="M559.9999999999999 50.8L564.3999999999999 45.8L568.7999999999998 50.8ZM559.9999999999999 57.1L564.3999999999999 62L568.7999999999998 57.1Z" fill="#000"/>
<text transform="translate(0 58.9) scale(0.61 1)" x="835.90 852.87 868.20 883.52" y="0" font-size="20.8" fill="#000">1200</text>
<path d="M491.3 52.8H500.09999999999997L495.7 57.2Z" fill="#000"/>
<path d="M642.6 52.8H651.4L647 57.2Z" fill="#000"/>
<path d="M896.2 52.7H904.8L900.5 57.2Z" fill="#000"/>
<rect x="209.5" y="47" width="1.3" height="18.6" fill="#b2b5c0"/><rect x="210.8" y="47" width="1.7" height="18.6" fill="#f2f3f7"/>
<rect x="432.7" y="47" width="1.3" height="18.6" fill="#b2b5c0"/><rect x="434" y="47" width="1.7" height="18.6" fill="#f2f3f7"/>
<rect x="662.5" y="47" width="1.3" height="18.6" fill="#b2b5c0"/><rect x="663.8" y="47" width="1.7" height="18.6" fill="#f2f3f7"/>
<rect x="708.3000000000001" y="47" width="1.3" height="18.6" fill="#b2b5c0"/><rect x="709.6" y="47" width="1.7" height="18.6" fill="#f2f3f7"/>
<rect x="861.3000000000001" y="47" width="1.3" height="18.6" fill="#b2b5c0"/><rect x="862.6" y="47" width="1.7" height="18.6" fill="#f2f3f7"/>
<rect x="952.3000000000001" y="47" width="1.3" height="18.6" fill="#b2b5c0"/><rect x="953.6" y="47" width="1.7" height="18.6" fill="#f2f3f7"/>
<rect x="668.8" y="40.2" width="27.6" height="28" fill="#fafafa"/>
<rect x="668.8" y="40.2" width="26" height="26.4" fill="#7c8184"/>
<rect x="670.5" y="41.9" width="24.3" height="24.7" fill="#aeb3b6"/>
<rect x="714.2" y="40.2" width="27.6" height="28" fill="#fafafa"/>
<rect x="714.2" y="40.2" width="26" height="26.4" fill="#7c8184"/>
<rect x="715.9000000000001" y="41.9" width="24.3" height="24.7" fill="#aeb3b6"/>
<rect x="672.8" y="44.4" width="21" height="20.8" fill="#fbfbf4"/>
<path d="M673 47.3H693.6M673 53.4H693.6M673 56.4H693.6M673 59.4H693.6M673 62.4H693.6" stroke="#d9d9cc" stroke-width="0.9"/>
<path d="M677 44.4V65.2M672.8 50.1H693.8" stroke="#4444a6" stroke-width="2"/>
<path d="M681 54.4H688.4L686 56.8L691.4 62.2L688.8 64.8L683.4 59.4L681 61.8Z" fill="#9a22b4"/>
<path d="M718.9 46.2L732.6 51.6L728.2 54L734.8 60.6L732 63.4L725.4 56.8L723.6 61.2Z" fill="#ece8fb" stroke="#5a4ec4" stroke-width="1.7" stroke-linejoin="round"/>
<path d="M757.8 64.6C756 60 753.4 57.6 752 55.4C751.2 53.6 753.4 52.6 755 54L757.4 56.4L756.6 47.2C756.6 45.2 759.2 45.2 759.6 47L760.4 51.6L760.6 44.8C760.8 43 763.4 43 763.6 44.8L764 51.4L765 45.8C765.4 44.2 767.8 44.6 767.8 46.2L767.6 52.4L769 48.8C769.8 47.4 771.8 48 771.6 49.8C771.2 54 771.4 59.4 768 64.6Z" fill="#fffdf2" stroke="#d68a16" stroke-width="1.5" stroke-linejoin="round"/>
<g transform="translate(798 54) rotate(-45.5)"><rect x="-9" y="-3.6" width="24.5" height="7.2" rx="2.6" fill="#fbe3b0" stroke="#e49a22" stroke-width="1.5"/><path d="M-9 -3.2L-13.4 -1.2V1.2L-9 3.2Z" fill="#f0b040" stroke="#d88a18" stroke-width="1"/><path d="M-13.4 -1L-15.6 0L-13.4 1Z" fill="#9a6a20" stroke="#9a6a20" stroke-width="1"/><rect x="-6" y="-1.6" width="19" height="2.2" fill="#fff6dc"/></g>
<path d="M839.7 54.1L845.3 59.7L839.7 65.3L834.1 59.7Z" fill="#0f2a78"/>
<g fill="#e8eefc"><rect x="837.2" y="57.2" width="1.7" height="1.7"/><rect x="840.5" y="57.2" width="1.7" height="1.7"/><rect x="837.2" y="60.5" width="1.7" height="1.7"/><rect x="840.5" y="60.5" width="1.7" height="1.7"/></g>
<g transform="translate(834.2 54) rotate(-45.5)"><rect x="-9" y="-3.6" width="24.5" height="7.2" rx="2.6" fill="#cfe0ff" stroke="#2f6fe0" stroke-width="1.5"/><path d="M-9 -3.2L-13.4 -1.2V1.2L-9 3.2Z" fill="#4a86ee" stroke="#2a62cc" stroke-width="1"/><path d="M-13.4 -1L-15.6 0L-13.4 1Z" fill="#1c4aa8" stroke="#1c4aa8" stroke-width="1"/><rect x="-6" y="-1.6" width="19" height="2.2" fill="#f2f6ff"/></g>
<rect x="870" y="44.6" width="21.6" height="19.6" fill="#fdfdfd"/>
<path d="M870 48H891.6M870 51.4H891.6M870 54.8H891.6M870 58.2H891.6M870 61.4H891.6" stroke="#e6e0dc" stroke-width="0.9"/>
<path d="M870.4 43.8V64.6H891.8" stroke="#8a8a8a" stroke-width="1.6" fill="none"/>
<g fill="#0a84ff"><rect x="873" y="55" width="3.4" height="9"/><rect x="878" y="46.4" width="3.4" height="17.6"/><rect x="882.8" y="49.6" width="3.4" height="14.4"/><rect x="887.4" y="56.4" width="3.2" height="7.6"/></g>
<rect x="914" y="44.6" width="21.6" height="19.6" fill="#fdfdfd"/>
<path d="M914 48H935.6M914 51.4H935.6M914 54.8H935.6M914 58.2H935.6M914 61.4H935.6" stroke="#e6e0dc" stroke-width="0.9"/>
<path d="M914.4 43.8V64.6H935.8" stroke="#8a8a8a" stroke-width="1.6" fill="none"/>
<g fill="#0a84ff"><rect x="917" y="55" width="3.4" height="9"/><rect x="922" y="46.4" width="3.4" height="17.6"/><rect x="926.8" y="49.6" width="3.4" height="14.4"/><rect x="931.4" y="56.4" width="3.2" height="7.6"/></g>
<path d="M917.6 47L931.6 61M931.6 47L917.6 61" stroke="#ff2a2a" stroke-width="2.2" fill="none"/><circle cx="917.6" cy="47" r="1.7" fill="#ff2a2a"/><circle cx="931.6" cy="47" r="1.7" fill="#ff2a2a"/><circle cx="917.6" cy="61" r="1.7" fill="#ff2a2a"/><circle cx="931.6" cy="61" r="1.7" fill="#ff2a2a"/>
<path d="M966.4 46.8A8.6 8.6 0 1 0 977.2 60.6" fill="none" stroke="#1c8ce4" stroke-width="3.4"/>
<path d="M960.6 43.2H970.2V52.4Z" fill="#1464ff"/>
<text x="971.2" y="58.4" font-size="13.4" font-weight="bold" fill="#1272d6">R</text>
<g transform="translate(1980.3 49.6) rotate(-45)"><rect x="-22.4" y="-2.6" width="15" height="5.2" rx="1.6" fill="#4a3cf2"/><rect x="-20" y="-1.5" width="10" height="1.7" fill="#a9a2ff"/><path d="M4.5 -5.2A6.6 6.6 0 1 0 4.5 5.2L4.5 2.3H0A2.3 2.3 0 0 1 0 -2.3H4.5Z" fill="#f1eeff" stroke="#6c5ed6" stroke-width="1.7" stroke-linejoin="round"/><path d="M-9.4 -2L-5.6 -3V3L-9.4 2Z" fill="#f1eeff"/></g>
<path d="M1997.5 0H2011V12H2005.8V8.5A7.5 7.5 0 0 0 1998 1.2Z" fill="#f4f4f9"/>
</g>
</g></svg></body></html>
